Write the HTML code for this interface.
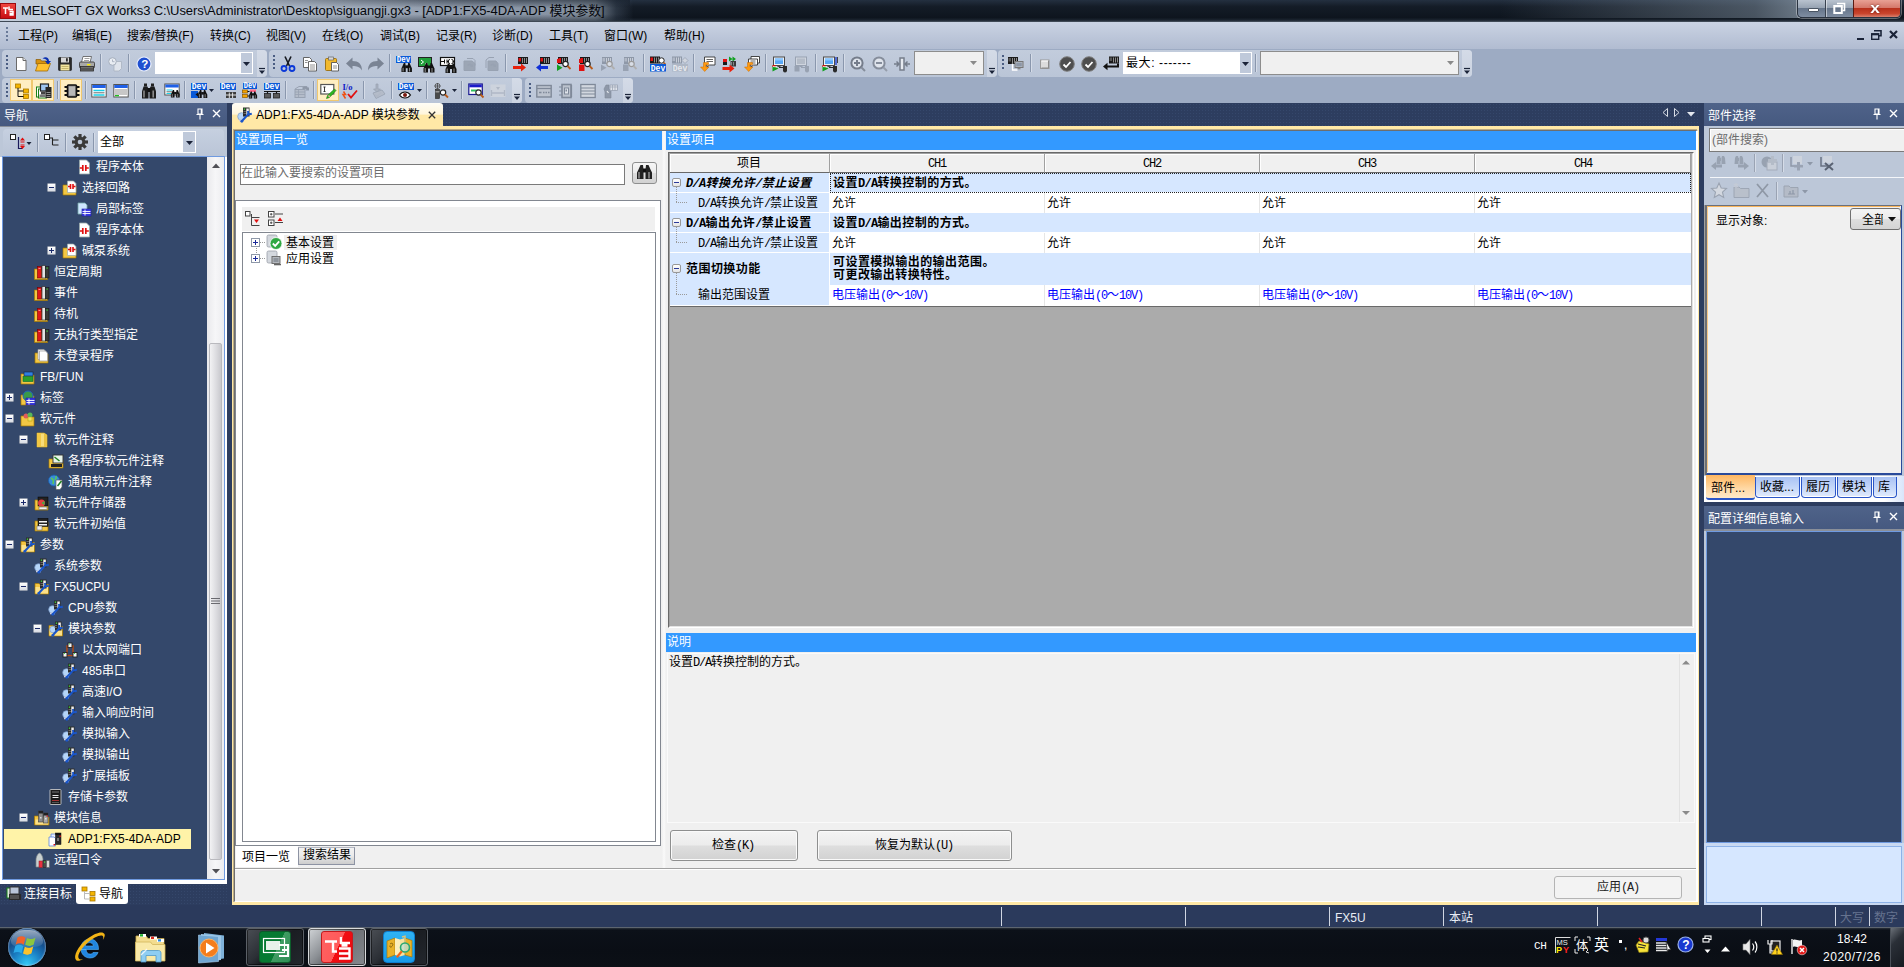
<!DOCTYPE html>
<html lang="zh-CN">
<head>
<meta charset="utf-8">
<title>MELSOFT GX Works3</title>
<style>
*{box-sizing:border-box;margin:0;padding:0}
html,body{width:1904px;height:967px;overflow:hidden;background:#9dabc3}
body{position:relative;font-family:"Liberation Sans","Noto Sans CJK SC",sans-serif;font-size:12px;color:#000;line-height:1}
.a{position:absolute}
.t{position:absolute;white-space:nowrap;line-height:16px;height:16px}
.w{color:#fff}
.sim{font-family:"Liberation Sans","Noto Sans CJK SC",sans-serif}
.mono{font-family:"Liberation Mono","Noto Sans CJK SC",monospace}
svg{position:absolute;overflow:visible}
/* title */
#title{left:0;top:0;width:1904px;height:22px;background:linear-gradient(#243040 0,#141c27 30%,#0e151e 80%,#1c2530 92%,#4d5764 100%)}
#tglow{left:0;top:0;width:700px;height:21px;background:linear-gradient(90deg,#c3cddb 0,#bcc7d6 22%,#a9b4c3 45%,#939eae 62%,#8793a3 80%,#76828f 85%,rgba(60,72,88,.6) 88%,rgba(20,28,39,0) 90.500%)}
#tvig{left:150px;top:0;width:480px;height:21px;background:linear-gradient(rgba(18,26,37,.55),rgba(18,26,37,0) 38%,rgba(18,26,37,0) 68%,rgba(18,26,37,.5));-webkit-mask-image:linear-gradient(90deg,transparent,#000 70%);mask-image:linear-gradient(90deg,transparent,#000 70%)}
#thl{left:1500px;top:0;width:300px;height:18px;background:linear-gradient(90deg,rgba(120,135,150,0),rgba(120,135,150,.55) 85%,rgba(135,150,165,.75))}
#menubar{left:0;top:22px;width:1904px;height:27px;background:linear-gradient(#cad3e3,#bcc6d9 55%,#b1bcd1)}
.tbp{position:absolute;background:linear-gradient(#c2ccdc,#bac5d7);border-radius:4px}
.sep{position:absolute;width:1px;height:18px;background:#8a97ad;box-shadow:1px 0 0 #d5dce8}
.grip{position:absolute;width:2px;height:14px;background:repeating-linear-gradient(#4a5d82 0 2px,transparent 2px 4px)}
.hl{position:absolute;background:#ffeec2;border:1px solid #f0c870}
.dockhdr{position:absolute;height:23px;background:linear-gradient(#4f6389,#465980);color:#fff}
.dots{background-color:#2d3d5f;background-image:radial-gradient(#35476b 0.8px,transparent 1px);background-size:3px 3px}
.tb2{height:21px;background:linear-gradient(#a9c2f4,#c6d8f9 55%,#e1ebfc);border:1px solid #2a56c8;border-top:0;border-radius:0 0 4px 4px;box-shadow:inset 0 -1px 0 #fff}
.ss{top:907px;width:1px;height:19px;background:#d0d6e2}
.tk{top:928px;width:58px;height:38px;border:1px solid #5b6067;border-radius:3px;background:linear-gradient(135deg,#4a4e54 0,#2b2f35 40%,#1a1d22 52%,#23272d 100%);box-shadow:inset 0 0 0 1px rgba(0,0,0,.5)}
.ln{font-family:"Liberation Mono",monospace;font-size:12px;letter-spacing:-1.2px}
.bd .ln{letter-spacing:-.7px}
</style>
</head>
<body>
<!-- title bar -->
<div id="title" class="a"></div>
<div id="tglow" class="a"></div>
<div id="thl" class="a"></div>
<div id="tvig" class="a"></div>
<div class="a" style="left:0;top:3px;width:16px;height:16px;background:linear-gradient(#f0453f,#c80d12);border:1px solid #9c0a0e"></div>
<svg style="left:1px;top:4px" width="14" height="14" viewBox="0 0 14 14"><path d="M2 4h5M4.5 4v6M8 2.5v3h4M8.5 7.5h3.5v3.500h-3.500M8.500 9.500h3.500" fill="none" stroke="#fff" stroke-width="1.500"/></svg>
<div class="t" id="ttext" style="left:21px;top:3px;font-size:13px;letter-spacing:-0.1px;color:#05070c">MELSOFT GX Works3 C:\Users\Administrator\Desktop\siguangji.gx3 - [ADP1:FX5-4DA-ADP 模块参数]</div>
<!-- caption buttons -->
<div class="a" style="left:1797px;top:0;width:104px;height:18px;border:1px solid #2a3340;border-top:0;border-radius:0 0 5px 5px;background:linear-gradient(#b9c3cf 0,#98a4b3 45%,#66758a 50%,#7f8da1 100%);box-shadow:0 0 0 1px rgba(255,255,255,.35)"></div>
<div class="a" style="left:1853px;top:0;width:47px;height:17px;border-radius:0 0 4px 0;background:linear-gradient(#e8a194 0,#d5786a 45%,#b8311c 50%,#c9452d 80%,#d9806e 100%);border-left:1px solid #5a1a12"></div>
<div class="a" style="left:1825px;top:0;width:1px;height:17px;background:#39424f;box-shadow:1px 0 0 rgba(255,255,255,.5)"></div>
<div class="a" style="left:1808px;top:8px;width:11px;height:4px;background:#fff;border:1px solid #4a5563;border-radius:1px"></div>
<svg style="left:1833px;top:2px" width="13" height="12" viewBox="0 0 13 12"><path d="M4 1.500h7.500v7h-2" fill="none" stroke="#fff" stroke-width="1.600"/><rect x="1.300" y="4" width="7.500" height="7" fill="none" stroke="#fff" stroke-width="2"/></svg>
<div class="t" style="left:1871px;top:0px;font-size:15px;font-weight:bold;color:#fff;text-shadow:0 0 2px #5a1a12;transform:scaleX(1.15)">x</div>
<!-- menu -->
<div id="menubar" class="a"></div>
<div class="grip" style="left:6px;top:27px;height:14px;background:repeating-linear-gradient(#6a7a98 0 2px,transparent 2px 4px)"></div>
<div class="t m" style="top:28px;left:18px">工程(P)</div>
<div class="t m" style="top:28px;left:72px">编辑(E)</div>
<div class="t m" style="top:28px;left:127px">搜索/替换(F)</div>
<div class="t m" style="top:28px;left:210px">转换(C)</div>
<div class="t m" style="top:28px;left:266px">视图(V)</div>
<div class="t m" style="top:28px;left:322px">在线(O)</div>
<div class="t m" style="top:28px;left:380px">调试(B)</div>
<div class="t m" style="top:28px;left:436px">记录(R)</div>
<div class="t m" style="top:28px;left:492px">诊断(D)</div>
<div class="t m" style="top:28px;left:549px">工具(T)</div>
<div class="t m" style="top:28px;left:604px">窗口(W)</div>
<div class="t m" style="top:28px;left:664px">帮助(H)</div>
<!-- mdi buttons -->
<div class="a" style="left:1857px;top:38px;width:7px;height:2px;background:#1a2338"></div>
<svg style="left:1871px;top:30px" width="11" height="10" viewBox="0 0 11 10"><path d="M3 .8h7v5h-2" fill="none" stroke="#1a2338" stroke-width="1.600"/><rect x=".7" y="3.800" width="7" height="5.500" fill="none" stroke="#1a2338" stroke-width="1.400"/><path d="M.7 4.500h7" stroke="#1a2338" stroke-width="1.600"/></svg>
<svg style="left:1889px;top:30px" width="9" height="9" viewBox="0 0 9 9"><path d="M1 1l7 7M8 1l-7 7" stroke="#1a2338" stroke-width="2.200"/></svg>
<!-- toolbar row 1 -->
<div class="tbp" style="left:2px;top:50px;width:265px;height:27px"></div>
<div class="grip" style="left:6px;top:55px"></div>
<svg style="left:13px;top:56px" width="16" height="16" viewBox="0 0 16 16"><path d="M3.500 1.500h6.500l3 3v10h-9.500z" fill="#fff" stroke="#6a6a6a" stroke-width="1"/><path d="M10 1.500v3h3" fill="#e8e8e8" stroke="#6a6a6a" stroke-width="1"/></svg>
<svg style="left:35px;top:56px" width="16" height="16" viewBox="0 0 16 16"><path d="M1 3.500h4.500l1 1.500h5v3h-10.500z" fill="#d8920f" stroke="#8a5a05" stroke-width="0.7"/><path d="M0.500 15l2.500-7.500h12.500l-3 7.500z" fill="#ffc02e" stroke="#a06a08" stroke-width="0.8"/><path d="M7.500 2.500c3-2.500 6.500-1 6.500 2.500h2l-3 3.500-3-3.500h2c0-1.500-2-2.500-4.500-2.500z" fill="#0a2fb0"/></svg>
<svg style="left:57px;top:56px" width="16" height="16" viewBox="0 0 16 16"><rect x="1.5" y="1.5" width="13" height="13" fill="#2a2a2a" stroke="#111" stroke-width="0.6" rx="0.8"/><rect x="4" y="1.5" width="8" height="5" fill="#d8d8d8"/><rect x="9" y="2.2" width="1.8" height="3.3" fill="#2a2a2a"/><rect x="3.5" y="8.5" width="9" height="6" fill="#f3e6a0"/><path d="M4.500 10.500h7M4.500 12.500h7" fill="none" stroke="#b8a860" stroke-width="0.8"/></svg>
<svg style="left:79px;top:56px" width="16" height="16" viewBox="0 0 16 16"><path d="M4 0.500h8.500l-1.500 6h-8.500z" fill="#fff" stroke="#555" stroke-width="0.8"/><path d="M5.500 2.500h5M5 4.500h5" fill="none" stroke="#888" stroke-width="0.8"/><rect x="0.5" y="6" width="15" height="6" fill="#a8a8a8" stroke="#3a3a3a" stroke-width="0.9" rx="1.2"/><rect x="1.5" y="10.5" width="13" height="4.5" fill="#6e6e6e" stroke="#2a2a2a" stroke-width="0.8"/><rect x="8" y="8" width="3.5" height="1.4" fill="#f4e800"/><path d="M2 13h12" fill="none" stroke="#3a3a3a" stroke-width="1"/></svg>
<div class="sep" style="left:100px;top:54px"></div>
<svg style="left:107px;top:56px" width="16" height="16" viewBox="0 0 16 16"><path d="M7 5.500h7.500v7l-2.500 2.500h-5z" fill="#dfe4ec" stroke="#aab2c0" stroke-width="0.8"/><circle cx="5.5" cy="5.5" r="3.8" fill="#e9edf3" stroke="#a6afbd" stroke-width="1"/><path d="M5.500 3.500v2.200h2" fill="none" stroke="#a6afbd" stroke-width="0.9"/></svg>
<div class="sep" style="left:128px;top:54px"></div>
<svg style="left:136px;top:56px" width="16" height="16" viewBox="0 0 16 16"><circle cx="8" cy="8" r="7" fill="#1f4fd0" stroke="#e8eefc" stroke-width="1.2"/><text x="5.2" y="12.2" font-size="11.5" font-family="Liberation Sans,monospace" font-weight="bold" fill="#fff">?</text></svg>
<div class="a" style="left:155px;top:52px;width:98px;height:22px;background:#fff"></div>
<div class="a" style="left:241px;top:53px;width:11px;height:20px;background:#bfc9da"></div>
<svg style="left:243px;top:62px" width="7" height="4" viewBox="0 0 7 4"><path d="M0 0h7l-3.500 4z" fill="#1a2338"/></svg>
<div class="a" style="left:257px;top:50px;width:10px;height:27px;background:linear-gradient(#d4dbe7,#cbd3e1);border-radius:0 4px 4px 0"></div>
<svg style="left:258px;top:67px" width="8" height="8" viewBox="0 0 8 8"><path d="M1 1.500h6" stroke="#1a2338" stroke-width="1.200"/><path d="M1 3.500h6l-3 3.500z" fill="#1a2338"/></svg>
<div class="tbp" style="left:269px;top:50px;width:728px;height:27px"></div>
<div class="grip" style="left:273px;top:55px"></div>
<svg style="left:280px;top:56px" width="16" height="16" viewBox="0 0 16 16"><path d="M5 0.500l4.500 9.500M11 0.500l-4.500 9.500" fill="none" stroke="#15181f" stroke-width="1.6"/><circle cx="4" cy="12.5" r="2.5" fill="none" stroke="#0a38d8" stroke-width="1.8"/><circle cx="12" cy="12.5" r="2.5" fill="none" stroke="#0a38d8" stroke-width="1.8"/></svg>
<svg style="left:302px;top:56px" width="16" height="16" viewBox="0 0 16 16"><path d="M1.500 1.500h6l2 2v8h-8z" fill="#fff" stroke="#555" stroke-width="0.9"/><path d="M6.500 5.500h6l2 2v7.500h-8z" fill="#fff" stroke="#555" stroke-width="0.9"/><path d="M8 9h5M8 11h5M8 13h5M3 4.500h3M3 6.500h2.500" fill="none" stroke="#777" stroke-width="0.8"/></svg>
<svg style="left:324px;top:56px" width="16" height="16" viewBox="0 0 16 16"><rect x="1.5" y="2.5" width="11" height="12" fill="#f1b92e" stroke="#9a6d0d" stroke-width="0.9" rx="1"/><rect x="4.5" y="1" width="5" height="3" fill="#d9d9d9" stroke="#666" stroke-width="0.7"/><path d="M7.500 6.500h5l2 2v6.500h-7z" fill="#fff" stroke="#555" stroke-width="0.9"/><path d="M9 10h4M9 12h4" fill="none" stroke="#777" stroke-width="0.8"/></svg>
<svg style="left:346px;top:56px" width="16" height="16" viewBox="0 0 16 16"><path d="M0 7.500l6.500-6v3.500c6 0 9.500 3 9.500 9.500c-2-3.500-5-4.500-9.500-4.500v3.500z" fill="#7a8494"/></svg>
<svg style="left:368px;top:56px" width="16" height="16" viewBox="0 0 16 16"><path d="M16 7.500l-6.500-6v3.500c-6 0-9.500 3-9.500 9.500c2-3.500 5-4.500 9.500-4.500v3.500z" fill="#7a8494"/></svg>
<div class="sep" style="left:389px;top:54px"></div>
<svg style="left:396px;top:56px" width="16" height="16" viewBox="0 0 16 16"><rect x="0" y="0" width="15" height="7" fill="#0a5ad8"/><text x="7.5" y="6.4" text-anchor="middle" font-size="8.6" font-family="Liberation Mono,monospace" font-weight="bold" fill="#fff" textLength="13.5" lengthAdjust="spacingAndGlyphs">Dev</text><g transform="translate(5,6.5) scale(0.95)"><path d="M1.500 4 L3 0.500 H4.500 L5 4 V10 H0.500 V6 Z" fill="#111"/><path d="M10.500 4 L9 0.500 H7.500 L7 4 V10 H11.500 V6 Z" fill="#111"/><rect x="4.5" y="3" width="3" height="3" fill="#111"/><path d="M2.200 5.500v4M9 5.500v4" fill="none" stroke="#8c8c8c" stroke-width="1.1"/></g></svg>
<svg style="left:418px;top:56px" width="16" height="16" viewBox="0 0 16 16"><rect x="0.5" y="1.5" width="13" height="9" fill="#1f9e3a" stroke="#222" stroke-width="1"/><path d="M3 4l2.500 2-2.500 2M7 8h3" fill="none" stroke="#fff" stroke-width="1"/><g transform="translate(5,6.5) scale(1.0)"><path d="M1.500 4 L3 0.500 H4.500 L5 4 V10 H0.500 V6 Z" fill="#111"/><path d="M10.500 4 L9 0.500 H7.500 L7 4 V10 H11.500 V6 Z" fill="#111"/><rect x="4.5" y="3" width="3" height="3" fill="#111"/><path d="M2.200 5.500v4M9 5.500v4" fill="none" stroke="#8c8c8c" stroke-width="1.1"/></g></svg>
<svg style="left:440px;top:56px" width="16" height="16" viewBox="0 0 16 16"><rect x="0.5" y="1.5" width="14" height="8" fill="#fff" stroke="#111" stroke-width="1.2"/><path d="M1 5.500h3.500M4.500 3.500v4M7 3.500v4M7 5.500h2M10 3.500a2 2 0 0 0 0 4M11.500 3.500a2 2 0 0 1 0 4M12.500 5.500h2" fill="none" stroke="#111" stroke-width="1"/><g transform="translate(5,7) scale(1.0)"><path d="M1.500 4 L3 0.500 H4.500 L5 4 V10 H0.500 V6 Z" fill="#111"/><path d="M10.500 4 L9 0.500 H7.500 L7 4 V10 H11.500 V6 Z" fill="#111"/><rect x="4.5" y="3" width="3" height="3" fill="#111"/><path d="M2.200 5.500v4M9 5.500v4" fill="none" stroke="#8c8c8c" stroke-width="1.1"/></g></svg>
<svg style="left:462px;top:56px" width="16" height="16" viewBox="0 0 16 16"><path d="M2 5h8l3 2.500v7h-11z" fill="#9ca6b5" stroke="#98a2b2" stroke-width="1"/><path d="M5 2.500h6l2 2v5" fill="none" stroke="#98a2b2" stroke-width="1"/><path d="M5 9c2-2 4-2 5 0l1-1v3h-3l1-1c-1-1-2-1-3 0z" fill="#98a2b2"/></svg>
<svg style="left:484px;top:56px" width="16" height="16" viewBox="0 0 16 16"><path d="M4 5h8l2 2.500v7h-10z" fill="#9ca6b5" stroke="#98a2b2" stroke-width="1"/><path d="M2 12v-8l3-2.500h5" fill="none" stroke="#98a2b2" stroke-width="1"/><path d="M6 9c2-2 4-2 5 0l1-1v3h-3l1-1c-1-1-2-1-3 0z" fill="#98a2b2"/></svg>
<div class="sep" style="left:505px;top:54px"></div>
<svg style="left:512px;top:56px" width="16" height="16" viewBox="0 0 16 16"><rect x="6" y="1" width="10" height="7" fill="#1a1a1a"/><rect x="6.5" y="2" width="2.5" height="3.5" fill="#e01010"/><rect x="10" y="2" width="1" height="5" fill="#8a8a8a"/><rect x="12" y="2" width="1" height="5" fill="#8a8a8a"/><rect x="14" y="2" width="1" height="5" fill="#8a8a8a"/><path d="M1 10h8v-2.500l5 4-5 4v-2.500h-8z" fill="#e8200c"/></svg>
<svg style="left:534px;top:56px" width="16" height="16" viewBox="0 0 16 16"><rect x="6" y="1" width="10" height="7" fill="#1a1a1a"/><rect x="6.5" y="2" width="2.5" height="3.5" fill="#e01010"/><rect x="10" y="2" width="1" height="5" fill="#8a8a8a"/><rect x="12" y="2" width="1" height="5" fill="#8a8a8a"/><rect x="14" y="2" width="1" height="5" fill="#8a8a8a"/><path d="M14 10h-7v-2.500l-5 4 5 4v-2.500h7z" fill="#1030d8"/></svg>
<svg style="left:556px;top:56px" width="16" height="16" viewBox="0 0 16 16"><rect x="2" y="1" width="10" height="7" fill="#1a1a1a"/><rect x="2.5" y="2" width="2.5" height="3.5" fill="#e01010"/><rect x="6" y="2" width="1" height="5" fill="#8a8a8a"/><rect x="8" y="2" width="1" height="5" fill="#8a8a8a"/><rect x="10" y="2" width="1" height="5" fill="#8a8a8a"/><rect x="1" y="3" width="4" height="4" fill="#e01010"/><path d="M1 8.500l5.500 3.200-5.500 3.300z" fill="#10a020"/><circle cx="9.5" cy="8" r="2.7" fill="#fff" stroke="#222" stroke-width="1.2"/><path d="M11.5 10l3 3" fill="none" stroke="#b85a1a" stroke-width="1.8"/></svg>
<svg style="left:578px;top:56px" width="16" height="16" viewBox="0 0 16 16"><rect x="2" y="1" width="10" height="7" fill="#1a1a1a"/><rect x="2.5" y="2" width="2.5" height="3.5" fill="#e01010"/><rect x="6" y="2" width="1" height="5" fill="#8a8a8a"/><rect x="8" y="2" width="1" height="5" fill="#8a8a8a"/><rect x="10" y="2" width="1" height="5" fill="#8a8a8a"/><rect x="1" y="3" width="4" height="4" fill="#e01010"/><rect x="1" y="8.5" width="5.5" height="6.5" fill="#e01010"/><circle cx="9.5" cy="8" r="2.7" fill="#fff" stroke="#222" stroke-width="1.2"/><path d="M11.5 10l3 3" fill="none" stroke="#b85a1a" stroke-width="1.8"/></svg>
<svg style="left:600px;top:56px" width="16" height="16" viewBox="0 0 16 16"><rect x="2" y="1" width="10" height="7" fill="#8e98a8"/><rect x="2.5" y="2" width="2.5" height="3.5" fill="#b0b8c6"/><rect x="6" y="2" width="1" height="5" fill="#c8ced8"/><rect x="8" y="2" width="1" height="5" fill="#c8ced8"/><rect x="10" y="2" width="1" height="5" fill="#c8ced8"/><path d="M1 8.500l5.500 3.200-5.500 3.300z" fill="#98a2b2"/><circle cx="9.5" cy="8" r="2.7" fill="#d8dde6" stroke="#9a9a9a" stroke-width="1.2"/><path d="M11.5 10l3 3" fill="none" stroke="#b0b0b0" stroke-width="1.8"/></svg>
<svg style="left:622px;top:56px" width="16" height="16" viewBox="0 0 16 16"><rect x="2" y="1" width="10" height="7" fill="#8e98a8"/><rect x="2.5" y="2" width="2.5" height="3.5" fill="#b0b8c6"/><rect x="6" y="2" width="1" height="5" fill="#c8ced8"/><rect x="8" y="2" width="1" height="5" fill="#c8ced8"/><rect x="10" y="2" width="1" height="5" fill="#c8ced8"/><rect x="1" y="8.5" width="5.5" height="6.5" fill="#98a2b2"/><circle cx="9.5" cy="8" r="2.7" fill="#d8dde6" stroke="#9a9a9a" stroke-width="1.2"/><path d="M11.5 10l3 3" fill="none" stroke="#b0b0b0" stroke-width="1.8"/></svg>
<div class="sep" style="left:643px;top:54px"></div>
<svg style="left:650px;top:56px" width="16" height="16" viewBox="0 0 16 16"><rect x="0" y="0.5" width="10" height="7" fill="#1a1a1a"/><rect x="0.5" y="1.5" width="2.5" height="3.5" fill="#e01010"/><rect x="4" y="1.5" width="1" height="5" fill="#8a8a8a"/><rect x="6" y="1.5" width="1" height="5" fill="#8a8a8a"/><rect x="8" y="1.5" width="1" height="5" fill="#8a8a8a"/><circle cx="11.5" cy="4.5" r="2.7" fill="#fff" stroke="#222" stroke-width="1"/><path d="M13.500 6.500l2 2" fill="none" stroke="#b85a1a" stroke-width="1.6"/><rect x="0" y="8" width="16" height="7.5" fill="#0a5ad8"/><text x="8.0" y="14.9" text-anchor="middle" font-size="8.6" font-family="Liberation Mono,monospace" font-weight="bold" fill="#fff" textLength="14.5" lengthAdjust="spacingAndGlyphs">Dev</text></svg>
<svg style="left:672px;top:56px" width="16" height="16" viewBox="0 0 16 16"><rect x="0" y="0.5" width="10" height="7" fill="#8e98a8"/><rect x="0.5" y="1.5" width="2.5" height="3.5" fill="#b0b8c6"/><rect x="4" y="1.5" width="1" height="5" fill="#c8ced8"/><rect x="6" y="1.5" width="1" height="5" fill="#c8ced8"/><rect x="8" y="1.5" width="1" height="5" fill="#c8ced8"/><path d="M10 4.500l3-3 3 3-3 3z" fill="#d0d5de" stroke="#98a2b2" stroke-width="0.8"/><rect x="0" y="8" width="16" height="7.5" fill="#aeb7c5"/><text x="8.0" y="14.9" text-anchor="middle" font-size="8.6" font-family="Liberation Mono,monospace" font-weight="bold" fill="#e6e9ee" textLength="14.5" lengthAdjust="spacingAndGlyphs">Dev</text></svg>
<div class="sep" style="left:693px;top:54px"></div>
<svg style="left:700px;top:56px" width="16" height="16" viewBox="0 0 16 16"><path d="M4.500 1h10.500v8h-5.500l-2.500 2v-2h-2.500z" fill="#fff" stroke="#333" stroke-width="0.9"/><path d="M6.500 3.500h6.500M6.500 5.500h6.500" fill="none" stroke="#555" stroke-width="0.9"/><path d="M8.500 6.500h-5v4.500h-3l4.200 4.500 4.200-4.500h-3v-2.300h2.600z" fill="#ff9a10" stroke="#c86a00" stroke-width="0.5"/></svg>
<svg style="left:722px;top:56px" width="16" height="16" viewBox="0 0 16 16"><rect x="1" y="3" width="4" height="3" fill="#e01010"/><rect x="1" y="6" width="4" height="3" fill="#1a1a1a"/><path d="M7 0.500l3.500 2.500-3.500 2.500zM10.500 0.500l3.500 2.500-3.500 2.500z" fill="#10a020"/><rect x="8.5" y="5" width="5.5" height="5.5" fill="#3a3a3a"/><path d="M9.500 6v3.500M11.500 6v3.500" fill="none" stroke="#999" stroke-width="0.8"/><path d="M0.500 11h7v-2.500l5 4-5 4v-2.500h-7z" fill="#e8200c"/></svg>
<svg style="left:744px;top:56px" width="16" height="16" viewBox="0 0 16 16"><path d="M7 0.500h8.500v6.500h-8.500z" fill="#fff" stroke="#333" stroke-width="0.9"/><path d="M4.500 3h9v6h-4l-2.500 2v-2h-2.500z" fill="#fff" stroke="#333" stroke-width="0.9"/><path d="M6.500 5h5M6.500 7h5" fill="none" stroke="#555" stroke-width="0.9"/><path d="M8.500 6.500h-5v4.500h-3l4.200 4.500 4.200-4.500h-3v-2.300h2.600z" fill="#ff9a10" stroke="#c86a00" stroke-width="0.5"/></svg>
<div class="sep" style="left:765px;top:54px"></div>
<svg style="left:772px;top:56px" width="16" height="16" viewBox="0 0 16 16"><rect x="1.5" y="1" width="11" height="8.5" fill="#eef2f8" stroke="#4a4a4a" stroke-width="1"/><rect x="3" y="2.5" width="8" height="5.5" fill="#58a8f8"/><rect x="3" y="2.5" width="8" height="2" fill="#8cc8ff"/><rect x="5.5" y="9.5" width="3" height="1.5" fill="#4a4a4a"/><path d="M0.500 9.500l6 3-6 3z" fill="#10a020"/><rect x="0.5" y="9" width="3" height="2" fill="#e01010"/><path d="M1 10.500l4 .5" fill="none" stroke="#fff" stroke-width="0.8"/><path d="M7 11.500h4" fill="none" stroke="#2a2a2a" stroke-width="1"/><rect x="11" y="10" width="4" height="2" fill="#2a2a2a"/><path d="M11 12h4v2.500a2 2 0 0 1-4 0z" fill="#2a2a2a"/></svg>
<svg style="left:794px;top:56px" width="16" height="16" viewBox="0 0 16 16"><rect x="1.5" y="1" width="11" height="8.5" fill="#cfd5df" stroke="#98a2b2" stroke-width="1"/><rect x="3" y="2.5" width="8" height="5.5" fill="#b4bcc8"/><rect x="5.5" y="9.5" width="3" height="1.5" fill="#98a2b2"/><rect x="0.5" y="10" width="5" height="5.5" fill="#98a2b2"/><path d="M7 11.500h4" fill="none" stroke="#98a2b2" stroke-width="1"/><rect x="11" y="10" width="4" height="2" fill="#98a2b2"/><path d="M11 12h4v2.500a2 2 0 0 1-4 0z" fill="#98a2b2"/></svg>
<div class="sep" style="left:815px;top:54px"></div>
<svg style="left:822px;top:56px" width="16" height="16" viewBox="0 0 16 16"><rect x="1.5" y="1" width="11" height="8.5" fill="#eef2f8" stroke="#4a4a4a" stroke-width="1"/><rect x="3" y="2.5" width="8" height="5.5" fill="#58a8f8"/><rect x="3" y="2.5" width="8" height="2" fill="#8cc8ff"/><rect x="5.5" y="9.5" width="3" height="1.5" fill="#4a4a4a"/><path d="M0.500 9.500l6 3-6 3z" fill="#10a020"/><rect x="0.5" y="9" width="3" height="2" fill="#e01010"/><path d="M1 10.500l4 .5" fill="none" stroke="#fff" stroke-width="0.8"/><path d="M7 11.500h4" fill="none" stroke="#2a2a2a" stroke-width="1"/><rect x="11" y="10" width="4" height="2" fill="#2a2a2a"/><path d="M11 12h4v2.500a2 2 0 0 1-4 0z" fill="#2a2a2a"/><path d="M14 1v8" fill="none" stroke="#1a3ad0" stroke-width="1.3"/><path d="M15.500 1v6" fill="none" stroke="#222" stroke-width="0.8"/></svg>
<div class="sep" style="left:843px;top:54px"></div>
<svg style="left:850px;top:56px" width="16" height="16" viewBox="0 0 16 16"><circle cx="7" cy="7" r="5.6" fill="#dfe4ec" stroke="#757d8b" stroke-width="2"/><path d="M4 7h6M7 4v6" fill="none" stroke="#757d8b" stroke-width="2"/><path d="M11.500 11.500l3.500 3.500" fill="none" stroke="#858d9b" stroke-width="2"/></svg>
<svg style="left:872px;top:56px" width="16" height="16" viewBox="0 0 16 16"><circle cx="7" cy="7" r="5.6" fill="#dfe4ec" stroke="#858d9b" stroke-width="2"/><path d="M4 7h6" fill="none" stroke="#858d9b" stroke-width="2"/><path d="M11.500 11.500l3.500 3.500" fill="none" stroke="#959dab" stroke-width="2"/></svg>
<svg style="left:894px;top:56px" width="16" height="16" viewBox="0 0 16 16"><rect x="6" y="2" width="4" height="12" fill="#e6eaf0" stroke="#757d8b" stroke-width="1.5"/><path d="M0 8h4.500M2.500 5.500l2.500 2.500-2.500 2.500M16 8h-4.500M13.500 5.500l-2.500 2.500 2.500 2.500" fill="none" stroke="#757d8b" stroke-width="1.5"/></svg>
<div class="a" style="left:914px;top:51px;width:70px;height:24px;background:#f0f0f0;border:1px solid #8d8d8d"></div>
<svg style="left:970px;top:61px" width="7" height="4" viewBox="0 0 7 4"><path d="M0 0h7l-3.500 4z" fill="#8a8a8a"/></svg>
<div class="a" style="left:987px;top:50px;width:10px;height:27px;background:linear-gradient(#d4dbe7,#cbd3e1);border-radius:0 4px 4px 0"></div>
<svg style="left:988px;top:67px" width="8" height="8" viewBox="0 0 8 8"><path d="M1 1.500h6" stroke="#1a2338" stroke-width="1.200"/><path d="M1 3.500h6l-3 3.500z" fill="#1a2338"/></svg>
<div class="tbp" style="left:998px;top:50px;width:474px;height:27px"></div>
<div class="grip" style="left:1002px;top:55px"></div>
<svg style="left:1008px;top:56px" width="16" height="16" viewBox="0 0 16 16"><rect x="0" y="1" width="10" height="7" fill="#1a1a1a"/><rect x="0.5" y="2" width="2.5" height="3.5" fill="#555"/><rect x="4" y="2" width="1" height="5" fill="#8a8a8a"/><rect x="6" y="2" width="1" height="5" fill="#8a8a8a"/><rect x="8" y="2" width="1" height="5" fill="#8a8a8a"/><rect x="7" y="5.5" width="8" height="6" fill="#b4bac4" stroke="#777" stroke-width="1"/><rect x="8.2" y="6.7" width="5.6" height="3.6" fill="#8d97a7"/><path d="M4.500 7.500v6.500h5" fill="none" stroke="#fff" stroke-width="1.3"/><rect x="9.5" y="12" width="3" height="1.3" fill="#888"/></svg>
<div class="sep" style="left:1030px;top:54px"></div>
<svg style="left:1037px;top:56px" width="16" height="16" viewBox="0 0 16 16"><rect x="3.5" y="4" width="8.5" height="8.5" fill="#dcdcdc" stroke="#9a9a9a" stroke-width="1"/><path d="M4.500 5h6.500" fill="none" stroke="#fff" stroke-width="1"/><path d="M11.500 5v7h-7" fill="none" stroke="#8a8a8a" stroke-width="1"/></svg>
<svg style="left:1059px;top:56px" width="16" height="16" viewBox="0 0 16 16"><circle cx="8" cy="8" r="7.3" fill="#4e4e4e" stroke="#808080" stroke-width="1"/><path d="M4.500 8.500l2.500 2.500 4.500-5" fill="none" stroke="#fff" stroke-width="1.8"/></svg>
<svg style="left:1081px;top:56px" width="16" height="16" viewBox="0 0 16 16"><circle cx="8" cy="8" r="7.3" fill="#4e4e4e" stroke="#808080" stroke-width="1"/><path d="M4.500 8.500l2.500 2.500 4.500-5" fill="none" stroke="#fff" stroke-width="1.8"/></svg>
<svg style="left:1103px;top:56px" width="16" height="16" viewBox="0 0 16 16"><rect x="6" y="0.5" width="10" height="7" fill="#1a1a1a"/><rect x="6.5" y="1.5" width="2.5" height="3.5" fill="#555"/><rect x="10" y="1.5" width="1" height="5" fill="#8a8a8a"/><rect x="12" y="1.5" width="1" height="5" fill="#8a8a8a"/><rect x="14" y="1.5" width="1" height="5" fill="#8a8a8a"/><path d="M15 7.500v3h-11" fill="none" stroke="#111" stroke-width="2"/><path d="M0 10.500l4.500-3.800v7.600z" fill="#111"/></svg>
<div class="a" style="left:1123px;top:52px;width:129px;height:22px;background:#fff"></div>
<div class="a" style="left:1240px;top:53px;width:11px;height:20px;background:#bfc9da"></div>
<svg style="left:1242px;top:62px" width="7" height="4" viewBox="0 0 7 4"><path d="M0 0h7l-3.500 4z" fill="#1a2338"/></svg>
<div class="t" style="left:1126px;top:55px;letter-spacing:.6px">最大: -------</div>
<div class="sep" style="left:1255px;top:54px"></div>
<div class="a" style="left:1260px;top:51px;width:199px;height:24px;background:#f0f0f0;border:1px solid #8d8d8d"></div>
<svg style="left:1447px;top:61px" width="7" height="4" viewBox="0 0 7 4"><path d="M0 0h7l-3.500 4z" fill="#8a8a8a"/></svg>
<div class="a" style="left:1462px;top:50px;width:10px;height:27px;background:linear-gradient(#d4dbe7,#cbd3e1);border-radius:0 4px 4px 0"></div>
<svg style="left:1463px;top:67px" width="8" height="8" viewBox="0 0 8 8"><path d="M1 1.500h6" stroke="#1a2338" stroke-width="1.200"/><path d="M1 3.500h6l-3 3.500z" fill="#1a2338"/></svg>
<!-- toolbar row 2 -->
<div class="tbp" style="left:2px;top:78px;width:520px;height:25px"></div>
<div class="grip" style="left:6px;top:83px"></div>
<div class="hl" style="left:10px;top:79px;width:22px;height:22px"></div>
<div class="hl" style="left:32px;top:79px;width:22px;height:22px"></div>
<div class="hl" style="left:60px;top:79px;width:22px;height:22px"></div>
<div class="hl" style="left:317px;top:79px;width:22px;height:22px"></div>
<svg style="left:14px;top:83px" width="16" height="16" viewBox="0 0 16 16"><rect x="1.5" y="1" width="5" height="4" fill="#f4b400" stroke="#a87800" stroke-width="0.8"/><rect x="9.5" y="6" width="5" height="4" fill="#f4b400" stroke="#a87800" stroke-width="0.8"/><rect x="9.5" y="11.5" width="5" height="4" fill="#f4b400" stroke="#a87800" stroke-width="0.8"/><path d="M4 5v8.500h5.500M4 8h5.500" fill="none" stroke="#111" stroke-width="1"/></svg>
<svg style="left:36px;top:83px" width="16" height="16" viewBox="0 0 16 16"><rect x="0.5" y="4" width="8" height="10" fill="#fff" stroke="#188018" stroke-width="1"/><rect x="2.5" y="6" width="8" height="9" fill="#fff" stroke="#188018" stroke-width="1"/><rect x="4.5" y="1" width="8" height="7" fill="#9ec4ee" stroke="#222" stroke-width="1.2"/><rect x="9.5" y="4" width="6" height="11" fill="#262626"/><path d="M10.500 9.500h4M10.500 11.500h4M10.500 13.500h4" fill="none" stroke="#9a9a9a" stroke-width="0.9"/><rect x="5" y="8.5" width="4.5" height="3" fill="#444"/><rect x="3.5" y="11.5" width="6.5" height="2.5" fill="#777"/></svg>
<div class="sep" style="left:57px;top:81px"></div>
<svg style="left:64px;top:83px" width="16" height="16" viewBox="0 0 16 16"><rect x="3.5" y="2" width="9" height="12" fill="#8c8c8c" stroke="#111" stroke-width="1.6" rx="1"/><rect x="5" y="3.5" width="6" height="9" fill="#b8b8b8"/><path d="M0.500 4h3M0.500 8h3M0.500 12h3M12.500 4h3M12.500 8h3M12.500 12h3" fill="none" stroke="#111" stroke-width="1.8"/></svg>
<div class="sep" style="left:85px;top:81px"></div>
<svg style="left:91px;top:83px" width="16" height="16" viewBox="0 0 16 16"><rect x="0.8" y="1.5" width="14.4" height="12.5" fill="#fff" stroke="#555" stroke-width="1"/><rect x="1.3" y="2" width="13.4" height="3" fill="#1f60e8"/><path d="M2.500 7.500h11M2.500 12h11" fill="none" stroke="#18d0e8" stroke-width="1.3"/><path d="M2.500 9.800h11" fill="none" stroke="#444" stroke-width="0.8"/></svg>
<svg style="left:113px;top:83px" width="16" height="16" viewBox="0 0 16 16"><rect x="0.8" y="1.5" width="14.4" height="12.5" fill="#fff" stroke="#555" stroke-width="1"/><rect x="1.3" y="2" width="13.4" height="3" fill="#1f60e8"/><rect x="2.5" y="6.5" width="1" height="1" fill="#222"/><rect x="2.5" y="8.5" width="1" height="1" fill="#222"/><rect x="2.5" y="10.5" width="1" height="1" fill="#222"/><rect x="4.5" y="6.5" width="1" height="1" fill="#222"/><rect x="4.5" y="8.5" width="1" height="1" fill="#222"/><rect x="4.5" y="10.5" width="1" height="1" fill="#222"/><rect x="6.5" y="6.5" width="1" height="1" fill="#222"/><rect x="6.5" y="8.5" width="1" height="1" fill="#222"/><rect x="6.5" y="10.5" width="1" height="1" fill="#222"/><rect x="8.5" y="6.5" width="1" height="1" fill="#222"/><rect x="8.5" y="8.5" width="1" height="1" fill="#222"/><rect x="8.5" y="10.5" width="1" height="1" fill="#222"/><rect x="10.5" y="6.5" width="1" height="1" fill="#222"/><rect x="10.5" y="8.5" width="1" height="1" fill="#222"/><rect x="10.5" y="10.5" width="1" height="1" fill="#222"/><rect x="12.5" y="6.5" width="1" height="1" fill="#222"/><rect x="12.5" y="8.5" width="1" height="1" fill="#222"/><rect x="12.5" y="10.5" width="1" height="1" fill="#222"/><rect x="2" y="12" width="4" height="1.3" fill="#20c020"/></svg>
<div class="sep" style="left:134px;top:81px"></div>
<svg style="left:141px;top:83px" width="16" height="16" viewBox="0 0 16 16"><rect x="3" y="0.5" width="3" height="3" fill="#222"/><rect x="10" y="0.5" width="3" height="3" fill="#222"/><path d="M2.500 3.500h4l1 3v9h-6.500v-7z" fill="#1c1c1c"/><path d="M13.500 3.500h-4l-1 3v9h6.500v-7z" fill="#1c1c1c"/><rect x="6.5" y="5" width="3" height="4" fill="#111"/><path d="M3 7.500v7M12.200 7.500v7" fill="none" stroke="#8a8a8a" stroke-width="1.6"/></svg>
<svg style="left:164px;top:83px" width="16" height="16" viewBox="0 0 16 16"><rect x="0.8" y="1" width="14.4" height="11" fill="#fff" stroke="#555" stroke-width="1"/><rect x="1.3" y="1.5" width="13.4" height="3" fill="#1f60e8"/><path d="M2.500 7h6M2.500 10.500h5" fill="none" stroke="#18d0e8" stroke-width="1.2"/><path d="M2.500 8.800h6" fill="none" stroke="#444" stroke-width="0.8"/><g transform="translate(6.5,6.5) scale(0.8)"><path d="M1.500 4 L3 0.500 H4.500 L5 4 V10 H0.500 V6 Z" fill="#111"/><path d="M10.500 4 L9 0.500 H7.500 L7 4 V10 H11.500 V6 Z" fill="#111"/><rect x="4.5" y="3" width="3" height="3" fill="#111"/><path d="M2.200 5.500v4M9 5.500v4" fill="none" stroke="#8c8c8c" stroke-width="1.1"/></g></svg>
<div class="sep" style="left:184px;top:81px"></div>
<svg style="left:191px;top:83px" width="16" height="16" viewBox="0 0 16 16"><rect x="0" y="0" width="16" height="7" fill="#0a5ad8"/><text x="8.0" y="6.4" text-anchor="middle" font-size="8.6" font-family="Liberation Mono,monospace" font-weight="bold" fill="#fff" textLength="14.5" lengthAdjust="spacingAndGlyphs">Dev</text><rect x="0" y="8" width="7" height="7" fill="#0a5ad8"/><path d="M4.500 11.500l3-2.500v5z" fill="#111"/><g transform="translate(6.5,6.5) scale(0.85)"><path d="M1.500 4 L3 0.500 H4.500 L5 4 V10 H0.500 V6 Z" fill="#111"/><path d="M10.500 4 L9 0.500 H7.500 L7 4 V10 H11.500 V6 Z" fill="#111"/><rect x="4.5" y="3" width="3" height="3" fill="#111"/><path d="M2.200 5.500v4M9 5.500v4" fill="none" stroke="#8c8c8c" stroke-width="1.1"/></g></svg>
<svg style="left:209px;top:89px" width="5" height="3" viewBox="0 0 5 3"><path d="M0 0h5l-2.500 3z" fill="#1a2338"/></svg>
<svg style="left:220px;top:83px" width="16" height="16" viewBox="0 0 16 16"><rect x="0" y="0" width="16" height="7" fill="#0a5ad8"/><text x="8.0" y="6.4" text-anchor="middle" font-size="8.6" font-family="Liberation Mono,monospace" font-weight="bold" fill="#fff" textLength="14.5" lengthAdjust="spacingAndGlyphs">Dev</text><rect x="6" y="9" width="10" height="6" fill="#3c3c3c"/><path d="M6 12h10M9.300 9.500v5.500M12.600 9.500v5.500" fill="none" stroke="#f0f0f0" stroke-width="0.9"/></svg>
<svg style="left:242px;top:83px" width="16" height="16" viewBox="0 0 16 16"><rect x="1" y="0" width="14" height="6" fill="#0a5ad8"/><text x="8.0" y="5.4" text-anchor="middle" font-size="8.6" font-family="Liberation Mono,monospace" font-weight="bold" fill="#fff" textLength="12.5" lengthAdjust="spacingAndGlyphs">Dev</text><rect x="0.5" y="7" width="5" height="3" fill="#f4a400" stroke="#8a5a00" stroke-width="0.7"/><rect x="0.5" y="11.5" width="5" height="3" fill="#f4a400" stroke="#8a5a00" stroke-width="0.7"/><rect x="8" y="6.5" width="6" height="2.5" fill="#ff6a8a"/><g transform="translate(6.5,8) scale(0.75)"><path d="M1.500 4 L3 0.500 H4.500 L5 4 V10 H0.500 V6 Z" fill="#111"/><path d="M10.500 4 L9 0.500 H7.500 L7 4 V10 H11.500 V6 Z" fill="#111"/><rect x="4.5" y="3" width="3" height="3" fill="#111"/><path d="M2.200 5.500v4M9 5.500v4" fill="none" stroke="#8c8c8c" stroke-width="1.1"/></g><path d="M5.500 8.500h2M5.500 13h2" fill="none" stroke="#111" stroke-width="1"/></svg>
<svg style="left:264px;top:83px" width="16" height="16" viewBox="0 0 16 16"><rect x="0" y="0" width="16" height="7" fill="#0a5ad8"/><text x="8.0" y="6.4" text-anchor="middle" font-size="8.6" font-family="Liberation Mono,monospace" font-weight="bold" fill="#fff" textLength="14.5" lengthAdjust="spacingAndGlyphs">Dev</text><rect x="0.5" y="10.5" width="6" height="4.5" fill="#5a5a5a" stroke="#222" stroke-width="0.8"/><rect x="9.5" y="10.5" width="6" height="4.5" fill="#5a5a5a" stroke="#222" stroke-width="0.8"/><path d="M0 8.500h16M3.500 10.500v-2M12.500 10.500v-2" fill="none" stroke="#111" stroke-width="1.2"/></svg>
<div class="sep" style="left:285px;top:81px"></div>
<svg style="left:293px;top:83px" width="16" height="16" viewBox="0 0 16 16"><path d="M2 6l4-2.500h8v3" fill="none" stroke="#98a2b2" stroke-width="1"/><rect x="2" y="6.5" width="10" height="8" fill="#b4bcc9" stroke="#98a2b2" stroke-width="1"/><path d="M2 9h10M2 11.500h10M5.500 6.500v8" fill="none" stroke="#98a2b2" stroke-width="0.8"/><path d="M9 5c2-2 5-2 6 0l1-1v3.500h-3.500l1-1c-1-1-2-1-3 0z" fill="#8e98a8"/></svg>
<div class="sep" style="left:313px;top:81px"></div>
<svg style="left:320px;top:83px" width="16" height="16" viewBox="0 0 16 16"><rect x="0.8" y="1.5" width="13" height="9.5" fill="#fff" stroke="#555" stroke-width="1.2"/><path d="M3.500 4h2M4.500 4v4.500M3.500 8.500h2" fill="none" stroke="#222" stroke-width="0.9"/><path d="M14.500 6l1.500 1.500-6.500 7-3 1 1-3z" fill="#2fb820" stroke="#1a7a10" stroke-width="0.6"/><path d="M8.500 12.500l1.500 1.500" fill="none" stroke="#f0a0a0" stroke-width="1.5"/></svg>
<svg style="left:342px;top:83px" width="16" height="16" viewBox="0 0 16 16"><text x="0.5" y="7" font-size="8.5" font-family="Liberation Serif,monospace" font-weight="bold" fill="#1020c8">I/o</text><path d="M1.500 8.500l2 3-2.500 0 2.500 4" fill="none" stroke="#f05010" stroke-width="1.5"/><path d="M6 11l3 3.500 6-7" fill="none" stroke="#e01010" stroke-width="1.8"/></svg>
<div class="sep" style="left:363px;top:81px"></div>
<svg style="left:370px;top:83px" width="16" height="16" viewBox="0 0 16 16"><path d="M6 1v5h-2.500l3.500 3.500 3.500-3.500h-2.500v-5z" fill="#a9b2c0" stroke="#98a2b2" stroke-width="0.7"/><path d="M3 10l9-3 3 4-9 4.500z" fill="#b4bcc9" stroke="#98a2b2" stroke-width="0.8"/><path d="M5 11.500l2 2 4-4" fill="none" stroke="#b0b8c6" stroke-width="1.3"/></svg>
<div class="sep" style="left:391px;top:81px"></div>
<svg style="left:398px;top:83px" width="16" height="16" viewBox="0 0 16 16"><rect x="0" y="0" width="16" height="7" fill="#0a5ad8"/><text x="8.0" y="6.4" text-anchor="middle" font-size="8.6" font-family="Liberation Mono,monospace" font-weight="bold" fill="#fff" textLength="14.5" lengthAdjust="spacingAndGlyphs">Dev</text><path d="M1.500 12c3-4 8-4 11 0c-3 4-8 4-11 0z" fill="#fff" stroke="#111" stroke-width="1.2"/><circle cx="7" cy="12" r="2" fill="#7a1a10"/></svg>
<svg style="left:417px;top:89px" width="5" height="3" viewBox="0 0 5 3"><path d="M0 0h5l-2.500 3z" fill="#1a2338"/></svg>
<div class="sep" style="left:426px;top:81px"></div>
<svg style="left:433px;top:83px" width="16" height="16" viewBox="0 0 16 16"><circle cx="4.5" cy="3" r="2.5" fill="none" stroke="#444" stroke-width="0.8"/><path d="M4.500 0v6M1.500 3h6" fill="none" stroke="#444" stroke-width="0.8"/><rect x="2.5" y="6.5" width="4" height="9" fill="#4a4a4a" stroke="#222" stroke-width="0.6"/><rect x="2.5" y="8" width="4" height="1.5" fill="#999"/><circle cx="10" cy="9.5" r="2.7" fill="#fff" stroke="#222" stroke-width="1.2"/><path d="M12 11.5l3 3" fill="none" stroke="#b85a1a" stroke-width="1.8"/></svg>
<svg style="left:452px;top:89px" width="5" height="3" viewBox="0 0 5 3"><path d="M0 0h5l-2.500 3z" fill="#1a2338"/></svg>
<div class="sep" style="left:461px;top:81px"></div>
<svg style="left:468px;top:83px" width="16" height="16" viewBox="0 0 16 16"><rect x="0.8" y="1" width="13.5" height="10.5" fill="#fff" stroke="#1a1a90" stroke-width="1.2"/><rect x="1.3" y="1.5" width="12.5" height="2.8" fill="#1a1ac8"/><rect x="3" y="6.5" width="7" height="2" fill="#30c060"/><circle cx="10.5" cy="9.5" r="2.7" fill="#fff" stroke="#222" stroke-width="1.2"/><path d="M12.5 11.5l3 3" fill="none" stroke="#b85a1a" stroke-width="1.8"/></svg>
<svg style="left:490px;top:83px" width="16" height="16" viewBox="0 0 16 16"><rect x="0.5" y="1.5" width="15" height="12.5" fill="#cdd3dd"/><path d="M1.500 7v6M14.500 7v6M1.500 10h13" fill="none" stroke="#b0b8c6" stroke-width="1.3"/><path d="M6 4h4l-2 3z" fill="#b0b8c6"/></svg>
<div class="a" style="left:512px;top:78px;width:10px;height:25px;background:linear-gradient(#d4dbe7,#cbd3e1);border-radius:0 4px 4px 0"></div>
<svg style="left:513px;top:93px" width="8" height="8" viewBox="0 0 8 8"><path d="M1 1.500h6" stroke="#1a2338" stroke-width="1.200"/><path d="M1 3.500h6l-3 3.500z" fill="#1a2338"/></svg>
<div class="tbp" style="left:525px;top:78px;width:108px;height:25px"></div>
<div class="grip" style="left:529px;top:83px"></div>
<svg style="left:536px;top:83px" width="16" height="16" viewBox="0 0 16 16"><rect x="0.8" y="2.5" width="14.4" height="11.5" fill="#bcc3ce" stroke="#7f8999" stroke-width="1.4"/><path d="M1 5.500h14" fill="none" stroke="#7f8999" stroke-width="1.2"/><path d="M3 9.500h2.500M7 9.500h1.500M9.500 9.500h1.500M12 9.500h1.500" fill="none" stroke="#7f8999" stroke-width="1.5"/></svg>
<svg style="left:558px;top:83px" width="16" height="16" viewBox="0 0 16 16"><rect x="4" y="1.5" width="9" height="13" fill="#bcc3ce" stroke="#7f8999" stroke-width="1.6"/><rect x="6.5" y="5" width="4" height="6" fill="#dfe3ea" stroke="#7f8999" stroke-width="1"/><path d="M1 4h2.500M1 8h2.500M1 12h2.500M13.500 2v12" fill="none" stroke="#7f8999" stroke-width="1.2"/><rect x="7.5" y="6.5" width="1.5" height="2" fill="#7f8999"/></svg>
<svg style="left:580px;top:83px" width="16" height="16" viewBox="0 0 16 16"><rect x="0.8" y="1.5" width="14.4" height="13" fill="#d2d7df" stroke="#7f8999" stroke-width="1.3"/><path d="M1 5h14M1 8h14M1 11h14" fill="none" stroke="#7f8999" stroke-width="1.2"/></svg>
<svg style="left:602px;top:83px" width="16" height="16" viewBox="0 0 16 16"><path d="M2 6l2-4h3v4l2 2v7h-6v-6z" fill="#8e98a8" stroke="#7f8999" stroke-width="0.6"/><rect x="8" y="2" width="7.5" height="5.5" fill="#dfe3ea" stroke="#98a2b2" stroke-width="0.8"/><path d="M8 4h7.500M10.500 2v5.500M13 2v5.500" fill="none" stroke="#98a2b2" stroke-width="0.7"/><path d="M5 8l1.500 2" fill="none" stroke="#e8ebf0" stroke-width="1.2"/></svg>
<div class="a" style="left:623px;top:78px;width:10px;height:25px;background:linear-gradient(#d4dbe7,#cbd3e1);border-radius:0 4px 4px 0"></div>
<svg style="left:624px;top:93px" width="8" height="8" viewBox="0 0 8 8"><path d="M1 1.500h6" stroke="#1a2338" stroke-width="1.200"/><path d="M1 3.500h6l-3 3.500z" fill="#1a2338"/></svg>
<!-- navigation panel -->
<div class="a" style="left:227px;top:103px;width:5px;height:803px;background:#2d3d5f"></div>
<div class="dockhdr" style="left:0;top:103px;width:227px"></div>
<div class="t w" style="left:4px;top:108px;font-size:12px">导航</div>
<svg style="left:195px;top:108px" width="10" height="12" viewBox="0 0 10 12"><path d="M3 1h4v5h-4zM1.500 6.500h7M5 6.500v5M6.300 1v5" fill="none" stroke="#fff" stroke-width="1.100"/></svg>
<svg style="left:212px;top:109px" width="9" height="9" viewBox="0 0 9 9"><path d="M1 1l7 7M8 1l-7 7" stroke="#fff" stroke-width="1.400"/></svg>
<div class="a" style="left:0;top:126px;width:227px;height:31px;background:#bcc7d8;border-top:1px solid #8a8f99"></div>
<div class="a" style="left:3px;top:129px;width:221px;height:27px;background:linear-gradient(#c6d0e0,#bac5d7);border-radius:4px"></div>
<svg style="left:10px;top:134px" width="22" height="16" viewBox="0 0 22 16"><rect x=".5" y=".5" width="5" height="5" fill="#fff" stroke="#222"/><path d="M8.500 3v11.500h4" fill="none" stroke="#1a1a5a" stroke-width="1.200"/><path d="M10 6.500h5l-2.500-3zM10 12h5l-2.500 3zM10.500 7.500h4v1h-4zM10.500 10.500h4v1h-4z" fill="#e01010"/><path d="M16.500 8h5l-2.500 3z" fill="#1a2338"/></svg>
<div class="sep" style="left:37px;top:133px;height:19px"></div>
<svg style="left:44px;top:134px" width="16" height="16" viewBox="0 0 16 16"><rect x=".5" y=".5" width="5" height="5" fill="#fff" stroke="#222"/><path d="M6 3h2.500v7M8.500 5h6M8.500 10h6" fill="none" stroke="#222" stroke-width="1.100" transform="translate(0,1)"/></svg>
<div class="sep" style="left:65px;top:133px;height:19px"></div>
<svg style="left:72px;top:134px" width="16" height="16" viewBox="0 0 16 16"><g transform="translate(8,8)"><rect x="-1.600" y="-8" width="3.200" height="4" fill="#3a3a3a" transform="rotate(0)"/><rect x="-1.600" y="-8" width="3.200" height="4" fill="#3a3a3a" transform="rotate(45)"/><rect x="-1.600" y="-8" width="3.200" height="4" fill="#3a3a3a" transform="rotate(90)"/><rect x="-1.600" y="-8" width="3.200" height="4" fill="#3a3a3a" transform="rotate(135)"/><rect x="-1.600" y="-8" width="3.200" height="4" fill="#3a3a3a" transform="rotate(180)"/><rect x="-1.600" y="-8" width="3.200" height="4" fill="#3a3a3a" transform="rotate(225)"/><rect x="-1.600" y="-8" width="3.200" height="4" fill="#3a3a3a" transform="rotate(270)"/><rect x="-1.600" y="-8" width="3.200" height="4" fill="#3a3a3a" transform="rotate(315)"/><circle r="5.300" fill="#3a3a3a"/><circle r="2.300" fill="#bcc7d8"/></g></svg>
<div class="sep" style="left:93px;top:133px;height:19px"></div>
<div class="a" style="left:98px;top:131px;width:98px;height:22px;background:#fff"></div>
<div class="a" style="left:183px;top:132px;width:12px;height:20px;background:#bfc9da"></div>
<svg style="left:186px;top:141px" width="7" height="4" viewBox="0 0 7 4"><path d="M0 0h7l-3.500 4z" fill="#1a2338"/></svg>
<div class="t" style="left:100px;top:134px">全部</div>
<div class="a" style="left:0;top:157px;width:227px;height:727px;background:#fff"></div>
<div class="a" style="left:2px;top:156px;width:223px;height:724px;background:#34486b;border:1px solid #6f9ae0"></div>
<div class="a" style="left:207px;top:157px;width:17px;height:722px;background:linear-gradient(90deg,#e9e9ec,#f6f6f8 50%,#ececef)"></div>
<div class="a" style="left:209px;top:343px;width:13px;height:517px;background:linear-gradient(90deg,#f2f2f4,#dcdce0 55%,#c8c8cd);border:1px solid #b9b9be;border-radius:2px"></div>
<svg style="left:211px;top:597px" width="9" height="8" viewBox="0 0 9 8"><path d="M0 1.500h9M0 4h9M0 6.500h9" stroke="#6a6a70" stroke-width="1"/></svg>
<svg style="left:212px;top:163px" width="8" height="5" viewBox="0 0 8 5"><path d="M0 5h8l-4-4.500z" fill="#505056"/></svg>
<svg style="left:212px;top:869px" width="8" height="5" viewBox="0 0 8 5"><path d="M0 0h8l-4 4.500z" fill="#505056"/></svg>
<div class="a" style="left:4px;top:829px;width:187px;height:20px;background:#fff3a8"></div>
<svg style="left:76px;top:159px" width="16" height="16" viewBox="0 0 16 16"><path d="M3.500 1h7l3 3v11h-10z" fill="#fff" stroke="#9aa" stroke-width="0.8"/><path d="M3.800 9h3M9.800 9h3M6.800 6v6M9.800 6v6" fill="none" stroke="#e01010" stroke-width="1.7"/></svg>
<div class="t" style="left:96px;top:159px;color:#fff">程序本体</div>
<div class="a" style="left:47px;top:183px;width:9px;height:9px;background:linear-gradient(#fff,#d8dce4);border:1px solid #8f98a8;border-radius:1px"></div>
<div class="a" style="left:49px;top:187px;width:5px;height:1px;background:#1a2a6a"></div>
<svg style="left:62px;top:180px" width="16" height="16" viewBox="0 0 16 16"><path d="M1 5h4l1 1h8v9h-13z" fill="#f2c744" stroke="#a87800" stroke-width="0.7"/><path d="M5.500 1h6l2.500 2.500v9h-8.500z" fill="#fff" stroke="#9aa" stroke-width="0.7"/><path d="M6 6.500h2.500M11 6.500h2.500M8.500 4v5M11 4v5" fill="none" stroke="#e01010" stroke-width="1.6"/></svg>
<div class="t" style="left:82px;top:180px;color:#fff">选择回路</div>
<svg style="left:76px;top:201px" width="16" height="16" viewBox="0 0 16 16"><path d="M2 2h7l2 2v9h-9z" fill="#cfe6ff" stroke="#7aa" stroke-width="0.8"/><rect x="6" y="8" width="9" height="7" fill="#3a3ae0" stroke="#2020a0" stroke-width="0.6"/><path d="M6.500 10.500h8M6.500 12.500h8M9 8.500v6" fill="none" stroke="#fff" stroke-width="0.9"/></svg>
<div class="t" style="left:96px;top:201px;color:#fff">局部标签</div>
<svg style="left:76px;top:222px" width="16" height="16" viewBox="0 0 16 16"><path d="M3.500 1h7l3 3v11h-10z" fill="#fff" stroke="#9aa" stroke-width="0.8"/><path d="M3.800 9h3M9.800 9h3M6.800 6v6M9.800 6v6" fill="none" stroke="#e01010" stroke-width="1.7"/></svg>
<div class="t" style="left:96px;top:222px;color:#fff">程序本体</div>
<div class="a" style="left:47px;top:246px;width:9px;height:9px;background:linear-gradient(#fff,#d8dce4);border:1px solid #8f98a8;border-radius:1px"></div>
<div class="a" style="left:49px;top:250px;width:5px;height:1px;background:#1a2a6a"></div>
<div class="a" style="left:51px;top:248px;width:1px;height:5px;background:#1a2a6a"></div>
<svg style="left:62px;top:243px" width="16" height="16" viewBox="0 0 16 16"><path d="M1 5h4l1 1h8v9h-13z" fill="#f2c744" stroke="#a87800" stroke-width="0.7"/><path d="M5.500 1h6l2.500 2.500v9h-8.500z" fill="#fff" stroke="#9aa" stroke-width="0.7"/><path d="M6 6.500h2.500M11 6.500h2.500M8.500 4v5M11 4v5" fill="none" stroke="#e01010" stroke-width="1.6"/></svg>
<div class="t" style="left:82px;top:243px;color:#fff">碱泵系统</div>
<svg style="left:34px;top:264px" width="16" height="16" viewBox="0 0 16 16"><path d="M0.500 5h4l1 1h8v9.500h-13z" fill="#f2c744" stroke="#a87800" stroke-width="0.7"/><rect x="3.5" y="2.5" width="4" height="11.5" fill="#e01818" stroke="#700" stroke-width="0.6"/><rect x="8" y="1.5" width="3.5" height="12.5" fill="#e4e4e4" stroke="#333" stroke-width="0.7"/><rect x="11.5" y="2.5" width="3.5" height="11.5" fill="#3a3a3a" stroke="#111" stroke-width="0.5"/><rect x="12.5" y="3.5" width="1.2" height="1.2" fill="#40e040"/><path d="M4.500 4.500h2" fill="none" stroke="#ffb0b0" stroke-width="0.8"/></svg>
<div class="t" style="left:54px;top:264px;color:#fff">恒定周期</div>
<svg style="left:34px;top:285px" width="16" height="16" viewBox="0 0 16 16"><path d="M0.500 5h4l1 1h8v9.500h-13z" fill="#f2c744" stroke="#a87800" stroke-width="0.7"/><rect x="3.5" y="2.5" width="4" height="11.5" fill="#e01818" stroke="#700" stroke-width="0.6"/><rect x="8" y="1.5" width="3.5" height="12.5" fill="#e4e4e4" stroke="#333" stroke-width="0.7"/><rect x="11.5" y="2.5" width="3.5" height="11.5" fill="#3a3a3a" stroke="#111" stroke-width="0.5"/><rect x="12.5" y="3.5" width="1.2" height="1.2" fill="#40e040"/><path d="M4.500 4.500h2" fill="none" stroke="#ffb0b0" stroke-width="0.8"/></svg>
<div class="t" style="left:54px;top:285px;color:#fff">事件</div>
<svg style="left:34px;top:306px" width="16" height="16" viewBox="0 0 16 16"><path d="M0.500 5h4l1 1h8v9.500h-13z" fill="#f2c744" stroke="#a87800" stroke-width="0.7"/><rect x="3.5" y="2.5" width="4" height="11.5" fill="#e01818" stroke="#700" stroke-width="0.6"/><rect x="8" y="1.5" width="3.5" height="12.5" fill="#e4e4e4" stroke="#333" stroke-width="0.7"/><rect x="11.5" y="2.5" width="3.5" height="11.5" fill="#3a3a3a" stroke="#111" stroke-width="0.5"/><rect x="12.5" y="3.5" width="1.2" height="1.2" fill="#40e040"/><path d="M4.500 4.500h2" fill="none" stroke="#ffb0b0" stroke-width="0.8"/></svg>
<div class="t" style="left:54px;top:306px;color:#fff">待机</div>
<svg style="left:34px;top:327px" width="16" height="16" viewBox="0 0 16 16"><path d="M0.500 5h4l1 1h8v9.500h-13z" fill="#f2c744" stroke="#a87800" stroke-width="0.7"/><rect x="3.5" y="2.5" width="4" height="11.5" fill="#e01818" stroke="#700" stroke-width="0.6"/><rect x="8" y="1.5" width="3.5" height="12.5" fill="#e4e4e4" stroke="#333" stroke-width="0.7"/><rect x="11.5" y="2.5" width="3.5" height="11.5" fill="#3a3a3a" stroke="#111" stroke-width="0.5"/><rect x="12.5" y="3.5" width="1.2" height="1.2" fill="#40e040"/><path d="M4.500 4.500h2" fill="none" stroke="#ffb0b0" stroke-width="0.8"/></svg>
<div class="t" style="left:54px;top:327px;color:#fff">无执行类型指定</div>
<svg style="left:34px;top:348px" width="16" height="16" viewBox="0 0 16 16"><path d="M1 5h4l1 1h8v9h-13z" fill="#f2c744" stroke="#a87800" stroke-width="0.7"/><path d="M4 1.500h6l2 2v8h-8z" fill="#f4f4f4" stroke="#999" stroke-width="0.7"/><path d="M5.500 3h6l2 2v8h-8z" fill="#fff" stroke="#999" stroke-width="0.7"/></svg>
<div class="t" style="left:54px;top:348px;color:#fff">未登录程序</div>
<svg style="left:20px;top:369px" width="16" height="16" viewBox="0 0 16 16"><path d="M1 5h4l1 1h8v9h-13z" fill="#f2c744" stroke="#a87800" stroke-width="0.7"/><rect x="4" y="3" width="9" height="4" fill="#2f7fe0" stroke="#124" stroke-width="0.6"/><rect x="3" y="7.5" width="10" height="5" fill="#2aa02a" stroke="#063" stroke-width="0.6"/></svg>
<div class="t" style="left:40px;top:369px;color:#fff">FB/FUN</div>
<div class="a" style="left:5px;top:393px;width:9px;height:9px;background:linear-gradient(#fff,#d8dce4);border:1px solid #8f98a8;border-radius:1px"></div>
<div class="a" style="left:7px;top:397px;width:5px;height:1px;background:#1a2a6a"></div>
<div class="a" style="left:9px;top:395px;width:1px;height:5px;background:#1a2a6a"></div>
<svg style="left:20px;top:390px" width="16" height="16" viewBox="0 0 16 16"><path d="M1 5h4l1 1h8v9h-13z" fill="#f2c744" stroke="#a87800" stroke-width="0.7"/><circle cx="8" cy="6" r="5" fill="#3a9a4a" stroke="#2060c0" stroke-width="1"/><rect x="6" y="8" width="9" height="7" fill="#3a3ae0" stroke="#2020a0" stroke-width="0.6"/><path d="M6.500 10.500h8M6.500 12.500h8M9 8.500v6" fill="none" stroke="#fff" stroke-width="0.9"/></svg>
<div class="t" style="left:40px;top:390px;color:#fff">标签</div>
<div class="a" style="left:5px;top:414px;width:9px;height:9px;background:linear-gradient(#fff,#d8dce4);border:1px solid #8f98a8;border-radius:1px"></div>
<div class="a" style="left:7px;top:418px;width:5px;height:1px;background:#1a2a6a"></div>
<svg style="left:20px;top:411px" width="16" height="16" viewBox="0 0 16 16"><path d="M1 5h4l1 1h8v9h-13z" fill="#f2c744" stroke="#a87800" stroke-width="0.7"/><circle cx="6" cy="5" r="2.5" fill="#e05a5a"/><circle cx="10" cy="4" r="2.5" fill="#58b858"/><rect x="8" y="6" width="4" height="4" fill="#f0e060" stroke="#a90" stroke-width="0.5"/></svg>
<div class="t" style="left:40px;top:411px;color:#fff">软元件</div>
<div class="a" style="left:19px;top:435px;width:9px;height:9px;background:linear-gradient(#fff,#d8dce4);border:1px solid #8f98a8;border-radius:1px"></div>
<div class="a" style="left:21px;top:439px;width:5px;height:1px;background:#1a2a6a"></div>
<svg style="left:34px;top:432px" width="16" height="16" viewBox="0 0 16 16"><path d="M3 1h7l3 2v12h-10z" fill="#f7dc7a" stroke="#c8a020" stroke-width="0.7"/><path d="M3 1h4v14h-4z" fill="#f2c744"/><path d="M10 1l3 2v12h-3z" fill="#e8c040"/></svg>
<div class="t" style="left:54px;top:432px;color:#fff">软元件注释</div>
<svg style="left:48px;top:453px" width="16" height="16" viewBox="0 0 16 16"><path d="M1 6h4l1 1h9v8h-14z" fill="#f2c744" stroke="#a87800" stroke-width="0.7"/><rect x="5" y="2" width="10" height="8" fill="#e8f4e8" stroke="#333" stroke-width="0.9"/><path d="M6.500 4l5 4" fill="none" stroke="#208020" stroke-width="1.5"/><rect x="3" y="11" width="11" height="3" fill="#222"/></svg>
<div class="t" style="left:68px;top:453px;color:#fff">各程序软元件注释</div>
<svg style="left:48px;top:474px" width="16" height="16" viewBox="0 0 16 16"><circle cx="6" cy="6.5" r="5.5" fill="#3a8ad8" stroke="#1a5aa8" stroke-width="0.8"/><path d="M3 4c2 1 3 3 2 6M8 2c1 2 0 3-1 4" fill="none" stroke="#5ac85a" stroke-width="1.6"/><path d="M8 6h6v7l-2 2.500h-4z" fill="#fff" stroke="#666" stroke-width="0.7"/><path d="M9.500 12l4-5" fill="none" stroke="#208020" stroke-width="1.5"/></svg>
<div class="t" style="left:68px;top:474px;color:#fff">通用软元件注释</div>
<div class="a" style="left:19px;top:498px;width:9px;height:9px;background:linear-gradient(#fff,#d8dce4);border:1px solid #8f98a8;border-radius:1px"></div>
<div class="a" style="left:21px;top:502px;width:5px;height:1px;background:#1a2a6a"></div>
<div class="a" style="left:23px;top:500px;width:1px;height:5px;background:#1a2a6a"></div>
<svg style="left:34px;top:495px" width="16" height="16" viewBox="0 0 16 16"><path d="M1 5h4l1 1h8v9h-13z" fill="#f2c744" stroke="#a87800" stroke-width="0.7"/><rect x="4" y="2" width="10" height="9" fill="#222" stroke="#000" stroke-width="0.5"/><circle cx="7.5" cy="8" r="3.5" fill="#e04040"/><path d="M7.500 8l3-2v4z" fill="#40b040"/><rect x="5" y="12" width="8" height="2.5" fill="#f0f0f0" stroke="#555" stroke-width="0.5"/></svg>
<div class="t" style="left:54px;top:495px;color:#fff">软元件存储器</div>
<svg style="left:34px;top:516px" width="16" height="16" viewBox="0 0 16 16"><path d="M1 5h4l1 1h8v9h-13z" fill="#f2c744" stroke="#a87800" stroke-width="0.7"/><rect x="4" y="2.5" width="10" height="8" fill="#222" stroke="#000" stroke-width="0.5"/><rect x="5" y="5" width="8" height="1.5" fill="#f4f4f4"/><rect x="5" y="8" width="8" height="1.5" fill="#f4f4f4"/><rect x="3" y="10" width="5" height="4" fill="#f0f0f0" stroke="#555" stroke-width="0.5"/></svg>
<div class="t" style="left:54px;top:516px;color:#fff">软元件初始值</div>
<div class="a" style="left:5px;top:540px;width:9px;height:9px;background:linear-gradient(#fff,#d8dce4);border:1px solid #8f98a8;border-radius:1px"></div>
<div class="a" style="left:7px;top:544px;width:5px;height:1px;background:#1a2a6a"></div>
<svg style="left:20px;top:537px" width="16" height="16" viewBox="0 0 16 16"><path d="M1 4.500h4l1 1h8.500v9.500h-13.500z" fill="#f5c542" stroke="#a87800" stroke-width="0.7"/><path d="M1.500 8h12.500v6.500h-12.500z" fill="#fbe08a"/><rect x="6" y="0.5" width="6.5" height="9" fill="#2c2c2c"/><rect x="9.3" y="1.5" width="2.5" height="6.5" fill="#f0f0f0"/><rect x="6.8" y="1.5" width="1.3" height="1.3" fill="#40e040"/><path d="M6.500 4.500h2.500M6.500 6.500h2.500" fill="none" stroke="#777" stroke-width="0.8"/><path d="M4.500 14.500l7-7.500" fill="none" stroke="#1a55c8" stroke-width="2"/><path d="M11.300 7.500l-.300-3.500M11.300 7.500l3.500-.700" fill="none" stroke="#1a55c8" stroke-width="1.9"/><circle cx="4.8" cy="14.3" r="1.4" fill="#1a55c8"/></svg>
<div class="t" style="left:40px;top:537px;color:#fff">参数</div>
<svg style="left:34px;top:558px" width="16" height="16" viewBox="0 0 16 16"><circle cx="4.5" cy="9.5" r="3.8" fill="#b5d5f8" stroke="#7a9ac8" stroke-width="0.7"/><rect x="2" y="12.5" width="5" height="1.8" fill="#d0d0e0"/><rect x="6" y="0.5" width="6.5" height="9" fill="#2c2c2c"/><rect x="9.3" y="1.5" width="2.5" height="6.5" fill="#f0f0f0"/><rect x="6.8" y="1.5" width="1.3" height="1.3" fill="#40e040"/><path d="M6.500 4.500h2.500M6.500 6.500h2.500" fill="none" stroke="#777" stroke-width="0.8"/><path d="M4.500 14.500l7-7.500" fill="none" stroke="#1a55c8" stroke-width="2"/><path d="M11.300 7.500l-.300-3.500M11.300 7.500l3.500-.700" fill="none" stroke="#1a55c8" stroke-width="1.9"/><circle cx="4.8" cy="14.3" r="1.4" fill="#1a55c8"/></svg>
<div class="t" style="left:54px;top:558px;color:#fff">系统参数</div>
<div class="a" style="left:19px;top:582px;width:9px;height:9px;background:linear-gradient(#fff,#d8dce4);border:1px solid #8f98a8;border-radius:1px"></div>
<div class="a" style="left:21px;top:586px;width:5px;height:1px;background:#1a2a6a"></div>
<svg style="left:34px;top:579px" width="16" height="16" viewBox="0 0 16 16"><path d="M1 4.500h4l1 1h8.500v9.500h-13.500z" fill="#f5c542" stroke="#a87800" stroke-width="0.7"/><path d="M1.500 8h12.500v6.500h-12.500z" fill="#fbe08a"/><rect x="6" y="0.5" width="6.5" height="9" fill="#2c2c2c"/><rect x="9.3" y="1.5" width="2.5" height="6.5" fill="#f0f0f0"/><rect x="6.8" y="1.5" width="1.3" height="1.3" fill="#40e040"/><path d="M6.500 4.500h2.500M6.500 6.500h2.500" fill="none" stroke="#777" stroke-width="0.8"/><path d="M4.500 14.500l7-7.500" fill="none" stroke="#1a55c8" stroke-width="2"/><path d="M11.300 7.500l-.300-3.500M11.300 7.500l3.500-.700" fill="none" stroke="#1a55c8" stroke-width="1.9"/><circle cx="4.8" cy="14.3" r="1.4" fill="#1a55c8"/></svg>
<div class="t" style="left:54px;top:579px;color:#fff">FX5UCPU</div>
<svg style="left:48px;top:600px" width="16" height="16" viewBox="0 0 16 16"><circle cx="4.5" cy="9.5" r="3.8" fill="#b5d5f8" stroke="#7a9ac8" stroke-width="0.7"/><rect x="2" y="12.5" width="5" height="1.8" fill="#d0d0e0"/><rect x="6" y="0.5" width="6.5" height="9" fill="#2c2c2c"/><rect x="9.3" y="1.5" width="2.5" height="6.5" fill="#f0f0f0"/><rect x="6.8" y="1.5" width="1.3" height="1.3" fill="#40e040"/><path d="M6.500 4.500h2.500M6.500 6.500h2.500" fill="none" stroke="#777" stroke-width="0.8"/><path d="M4.500 14.500l7-7.500" fill="none" stroke="#1a55c8" stroke-width="2"/><path d="M11.300 7.500l-.300-3.500M11.300 7.500l3.500-.700" fill="none" stroke="#1a55c8" stroke-width="1.9"/><circle cx="4.8" cy="14.3" r="1.4" fill="#1a55c8"/></svg>
<div class="t" style="left:68px;top:600px;color:#fff">CPU参数</div>
<div class="a" style="left:33px;top:624px;width:9px;height:9px;background:linear-gradient(#fff,#d8dce4);border:1px solid #8f98a8;border-radius:1px"></div>
<div class="a" style="left:35px;top:628px;width:5px;height:1px;background:#1a2a6a"></div>
<svg style="left:48px;top:621px" width="16" height="16" viewBox="0 0 16 16"><path d="M1 4.500h4l1 1h8.500v9.500h-13.500z" fill="#f5c542" stroke="#a87800" stroke-width="0.7"/><path d="M1.500 8h12.500v6.500h-12.500z" fill="#fbe08a"/><circle cx="5" cy="8.5" r="3.3" fill="#b5d5f8" stroke="#7a9ac8" stroke-width="0.7"/><rect x="7" y="0.5" width="6.5" height="9" fill="#2c2c2c"/><rect x="10.3" y="1.5" width="2.5" height="6.5" fill="#f0f0f0"/><rect x="7.8" y="1.5" width="1.3" height="1.3" fill="#40e040"/><path d="M6.500 4.500h2.500M6.500 6.500h2.500" fill="none" stroke="#777" stroke-width="0.8"/><path d="M4.500 14.500l7-7.500" fill="none" stroke="#1a55c8" stroke-width="2"/><path d="M11.300 7.500l-.300-3.500M11.300 7.500l3.500-.700" fill="none" stroke="#1a55c8" stroke-width="1.9"/><circle cx="4.8" cy="14.3" r="1.4" fill="#1a55c8"/></svg>
<div class="t" style="left:68px;top:621px;color:#fff">模块参数</div>
<svg style="left:62px;top:642px" width="16" height="16" viewBox="0 0 16 16"><path d="M5 12v-8h6v8" fill="none" stroke="#b84a10" stroke-width="1.4"/><path d="M3 13.500h10" fill="none" stroke="#b84a10" stroke-width="1.4"/><rect x="6" y="1" width="4" height="4.5" fill="#f0f0f0" stroke="#222" stroke-width="0.9"/><rect x="1" y="10.5" width="4" height="4.5" fill="#f0f0f0" stroke="#222" stroke-width="0.9"/><rect x="11" y="10.5" width="4" height="4.5" fill="#f0f0f0" stroke="#222" stroke-width="0.9"/><rect x="7" y="1.5" width="1" height="1" fill="#40e040"/><rect x="2" y="11" width="1" height="1" fill="#40e040"/><rect x="12" y="11" width="1" height="1" fill="#40e040"/></svg>
<div class="t" style="left:82px;top:642px;color:#fff">以太网端口</div>
<svg style="left:62px;top:663px" width="16" height="16" viewBox="0 0 16 16"><circle cx="4.5" cy="9.5" r="3.8" fill="#b5d5f8" stroke="#7a9ac8" stroke-width="0.7"/><rect x="2" y="12.5" width="5" height="1.8" fill="#d0d0e0"/><rect x="6" y="0.5" width="6.5" height="9" fill="#2c2c2c"/><rect x="9.3" y="1.5" width="2.5" height="6.5" fill="#f0f0f0"/><rect x="6.8" y="1.5" width="1.3" height="1.3" fill="#40e040"/><path d="M6.500 4.500h2.500M6.500 6.500h2.500" fill="none" stroke="#777" stroke-width="0.8"/><path d="M4.500 14.500l7-7.500" fill="none" stroke="#1a55c8" stroke-width="2"/><path d="M11.300 7.500l-.300-3.500M11.300 7.500l3.500-.700" fill="none" stroke="#1a55c8" stroke-width="1.9"/><circle cx="4.8" cy="14.3" r="1.4" fill="#1a55c8"/></svg>
<div class="t" style="left:82px;top:663px;color:#fff">485串口</div>
<svg style="left:62px;top:684px" width="16" height="16" viewBox="0 0 16 16"><circle cx="4.5" cy="9.5" r="3.8" fill="#b5d5f8" stroke="#7a9ac8" stroke-width="0.7"/><rect x="2" y="12.5" width="5" height="1.8" fill="#d0d0e0"/><rect x="6" y="0.5" width="6.5" height="9" fill="#2c2c2c"/><rect x="9.3" y="1.5" width="2.5" height="6.5" fill="#f0f0f0"/><rect x="6.8" y="1.5" width="1.3" height="1.3" fill="#40e040"/><path d="M6.500 4.500h2.500M6.500 6.500h2.500" fill="none" stroke="#777" stroke-width="0.8"/><path d="M4.500 14.500l7-7.500" fill="none" stroke="#1a55c8" stroke-width="2"/><path d="M11.300 7.500l-.300-3.500M11.300 7.500l3.500-.700" fill="none" stroke="#1a55c8" stroke-width="1.9"/><circle cx="4.8" cy="14.3" r="1.4" fill="#1a55c8"/></svg>
<div class="t" style="left:82px;top:684px;color:#fff">高速I/O</div>
<svg style="left:62px;top:705px" width="16" height="16" viewBox="0 0 16 16"><circle cx="4.5" cy="9.5" r="3.8" fill="#b5d5f8" stroke="#7a9ac8" stroke-width="0.7"/><rect x="2" y="12.5" width="5" height="1.8" fill="#d0d0e0"/><rect x="6" y="0.5" width="6.5" height="9" fill="#2c2c2c"/><rect x="9.3" y="1.5" width="2.5" height="6.5" fill="#f0f0f0"/><rect x="6.8" y="1.5" width="1.3" height="1.3" fill="#40e040"/><path d="M6.500 4.500h2.500M6.500 6.500h2.500" fill="none" stroke="#777" stroke-width="0.8"/><path d="M4.500 14.500l7-7.500" fill="none" stroke="#1a55c8" stroke-width="2"/><path d="M11.300 7.500l-.300-3.500M11.300 7.500l3.500-.700" fill="none" stroke="#1a55c8" stroke-width="1.9"/><circle cx="4.8" cy="14.3" r="1.4" fill="#1a55c8"/></svg>
<div class="t" style="left:82px;top:705px;color:#fff">输入响应时间</div>
<svg style="left:62px;top:726px" width="16" height="16" viewBox="0 0 16 16"><circle cx="4.5" cy="9.5" r="3.8" fill="#b5d5f8" stroke="#7a9ac8" stroke-width="0.7"/><rect x="2" y="12.5" width="5" height="1.8" fill="#d0d0e0"/><rect x="6" y="0.5" width="6.5" height="9" fill="#2c2c2c"/><rect x="9.3" y="1.5" width="2.5" height="6.5" fill="#f0f0f0"/><rect x="6.8" y="1.5" width="1.3" height="1.3" fill="#40e040"/><path d="M6.500 4.500h2.500M6.500 6.500h2.500" fill="none" stroke="#777" stroke-width="0.8"/><path d="M4.500 14.500l7-7.500" fill="none" stroke="#1a55c8" stroke-width="2"/><path d="M11.300 7.500l-.300-3.500M11.300 7.500l3.500-.700" fill="none" stroke="#1a55c8" stroke-width="1.9"/><circle cx="4.8" cy="14.3" r="1.4" fill="#1a55c8"/></svg>
<div class="t" style="left:82px;top:726px;color:#fff">模拟输入</div>
<svg style="left:62px;top:747px" width="16" height="16" viewBox="0 0 16 16"><circle cx="4.5" cy="9.5" r="3.8" fill="#b5d5f8" stroke="#7a9ac8" stroke-width="0.7"/><rect x="2" y="12.5" width="5" height="1.8" fill="#d0d0e0"/><rect x="6" y="0.5" width="6.5" height="9" fill="#2c2c2c"/><rect x="9.3" y="1.5" width="2.5" height="6.5" fill="#f0f0f0"/><rect x="6.8" y="1.5" width="1.3" height="1.3" fill="#40e040"/><path d="M6.500 4.500h2.500M6.500 6.500h2.500" fill="none" stroke="#777" stroke-width="0.8"/><path d="M4.500 14.500l7-7.500" fill="none" stroke="#1a55c8" stroke-width="2"/><path d="M11.300 7.500l-.300-3.500M11.300 7.500l3.500-.700" fill="none" stroke="#1a55c8" stroke-width="1.9"/><circle cx="4.8" cy="14.3" r="1.4" fill="#1a55c8"/></svg>
<div class="t" style="left:82px;top:747px;color:#fff">模拟输出</div>
<svg style="left:62px;top:768px" width="16" height="16" viewBox="0 0 16 16"><circle cx="4.5" cy="9.5" r="3.8" fill="#b5d5f8" stroke="#7a9ac8" stroke-width="0.7"/><rect x="2" y="12.5" width="5" height="1.8" fill="#d0d0e0"/><rect x="6" y="0.5" width="6.5" height="9" fill="#2c2c2c"/><rect x="9.3" y="1.5" width="2.5" height="6.5" fill="#f0f0f0"/><rect x="6.8" y="1.5" width="1.3" height="1.3" fill="#40e040"/><path d="M6.500 4.500h2.500M6.500 6.500h2.500" fill="none" stroke="#777" stroke-width="0.8"/><path d="M4.500 14.500l7-7.500" fill="none" stroke="#1a55c8" stroke-width="2"/><path d="M11.300 7.500l-.300-3.500M11.300 7.500l3.500-.700" fill="none" stroke="#1a55c8" stroke-width="1.9"/><circle cx="4.8" cy="14.3" r="1.4" fill="#1a55c8"/></svg>
<div class="t" style="left:82px;top:768px;color:#fff">扩展插板</div>
<svg style="left:48px;top:789px" width="16" height="16" viewBox="0 0 16 16"><rect x="2" y="0.5" width="11" height="15" fill="#1c1c1c" stroke="#d8d8d8" stroke-width="0.8" rx="0.8"/><rect x="4" y="2.5" width="7" height="1" fill="#777"/><path d="M4.500 6.500h6M4.500 8.500h6" fill="none" stroke="#e8e8e8" stroke-width="1"/><rect x="4" y="11" width="7" height="1" fill="#a03030"/><rect x="4" y="13" width="7" height="1" fill="#555"/></svg>
<div class="t" style="left:68px;top:789px;color:#fff">存储卡参数</div>
<div class="a" style="left:19px;top:813px;width:9px;height:9px;background:linear-gradient(#fff,#d8dce4);border:1px solid #8f98a8;border-radius:1px"></div>
<div class="a" style="left:21px;top:817px;width:5px;height:1px;background:#1a2a6a"></div>
<svg style="left:34px;top:810px" width="16" height="16" viewBox="0 0 16 16"><path d="M0.500 6h4l1 1h9.500v8h-14.500z" fill="#f5c542" stroke="#a87800" stroke-width="0.7"/><path d="M1.500 9.500h12.500v5h-12.500z" fill="#fbe08a"/><rect x="4.5" y="1" width="4.5" height="11" fill="#8e8e8e" stroke="#3a3a3a" stroke-width="0.6"/><rect x="4.5" y="1" width="4.5" height="2.5" fill="#222"/><rect x="9.5" y="3" width="4.5" height="10" fill="#a8a8a8" stroke="#3a3a3a" stroke-width="0.6"/><rect x="9.5" y="3" width="4.5" height="2.5" fill="#222"/><rect x="12.5" y="5.5" width="1.3" height="1.3" fill="#e01010"/><rect x="6" y="7" width="1.5" height="1.5" fill="#ddd"/><rect x="11" y="8" width="1.5" height="1.5" fill="#ddd"/></svg>
<div class="t" style="left:54px;top:810px;color:#fff">模块信息</div>
<svg style="left:48px;top:831px" width="16" height="16" viewBox="0 0 16 16"><path d="M3 3h5l1.500 1.500v7h-6.500z" fill="#e8f0ff" stroke="#5a86e0" stroke-width="0.8"/><path d="M1 6h5l1.500 1.500v7.500h-6.500z" fill="#fff" stroke="#5a86e0" stroke-width="0.8"/><rect x="7.5" y="2" width="5.5" height="11.5" fill="#2a2a2a" stroke="#111" stroke-width="0.5"/><rect x="7.5" y="2" width="5.5" height="2" fill="#111"/><rect x="11.5" y="4.5" width="1.3" height="1.5" fill="#e01010"/><rect x="9" y="7" width="2" height="3" fill="#777"/><rect x="5.5" y="13" width="1.5" height="1.5" fill="#e01010"/></svg>
<div class="t" style="left:68px;top:831px;color:#000">ADP1:FX5-4DA-ADP</div>
<svg style="left:34px;top:852px" width="16" height="16" viewBox="0 0 16 16"><path d="M2 15v-7c0-4 2.500-7 3.500-7s3.500 3 3.500 7v7z" fill="#c9d0d0" stroke="#808888" stroke-width="0.7"/><rect x="5" y="9" width="3.5" height="6.5" fill="#e83040" stroke="#901018" stroke-width="0.5"/><rect x="9" y="8.5" width="3.5" height="7" fill="#4a4a4a" stroke="#222" stroke-width="0.5"/><rect x="12.5" y="8.5" width="3" height="7" fill="#d8d8d8" stroke="#555" stroke-width="0.5"/><rect x="10" y="9.5" width="1.2" height="1.2" fill="#40e040"/></svg>
<div class="t" style="left:54px;top:852px;color:#fff">远程口令</div>
<div class="a dots" style="left:0;top:884px;width:227px;height:22px"></div>
<div class="a" style="left:76px;top:884px;width:52px;height:20px;background:#fff;border-radius:0 0 3px 3px"></div>
<svg style="left:6px;top:886px" width="16" height="16" viewBox="0 0 16 16"><rect x="1" y="2" width="9" height="10" fill="#dfe9df" stroke="#188018"/><rect x="4" y="1" width="9" height="7" fill="#b8c4d8" stroke="#333"/><rect x="3" y="8" width="12" height="6" fill="#2a2a2a"/><path d="M4 10h9M4 12h9" stroke="#8a8a8a" stroke-width=".8"/></svg>
<div class="t w" style="left:24px;top:886px">连接目标</div>
<svg style="left:81px;top:886px" width="16" height="16" viewBox="0 0 16 16"><rect x="1" y="1" width="5" height="4" fill="#f4b400" stroke="#a87800" stroke-width=".8"/><rect x="9" y="5.500" width="5" height="4" fill="#f4b400" stroke="#a87800" stroke-width=".8"/><rect x="9" y="11" width="5" height="4" fill="#f4b400" stroke="#a87800" stroke-width=".8"/><path d="M3.500 5v8h5.500M3.500 7.500h5.500" fill="none" stroke="#bbb" stroke-width="1"/></svg>
<div class="t" style="left:99px;top:886px">导航</div>
<!-- document tab strip -->
<div class="a dots" style="left:232px;top:103px;width:1472px;height:24px"></div>
<div class="a" style="left:1699px;top:103px;width:5px;height:803px;background:#2d3d5f"></div>
<div class="a" style="left:232px;top:103px;width:211px;height:26px;border-radius:3px 3px 0 0;background:linear-gradient(#fffdf6 0,#fff6dc 42%,#ffe8a6 48%,#ffe8a6 100%)"></div>
<svg style="left:237px;top:107px" width="16" height="16" viewBox="0 0 16 16"><circle cx="4.5" cy="9.5" r="3.8" fill="#b5d5f8" stroke="#7a9ac8" stroke-width="0.7"/><rect x="2" y="12.5" width="5" height="1.8" fill="#d0d0e0"/><rect x="6" y="0.5" width="6.5" height="9" fill="#2c2c2c"/><rect x="9.3" y="1.5" width="2.5" height="6.5" fill="#f0f0f0"/><rect x="6.8" y="1.5" width="1.3" height="1.3" fill="#40e040"/><path d="M6.500 4.500h2.500M6.500 6.500h2.500" fill="none" stroke="#777" stroke-width="0.8"/><path d="M4.500 14.500l7-7.500" fill="none" stroke="#1a55c8" stroke-width="2"/><path d="M11.300 7.500l-.300-3.500M11.300 7.500l3.500-.700" fill="none" stroke="#1a55c8" stroke-width="1.9"/><circle cx="4.8" cy="14.3" r="1.4" fill="#1a55c8"/></svg>
<div class="t" style="left:256px;top:107px">ADP1:FX5-4DA-ADP 模块参数</div>
<svg style="left:428px;top:111px" width="8" height="8" viewBox="0 0 8 8"><path d="M.8.8l6.400 6.400M7.200.8l-6.400 6.400" stroke="#333" stroke-width="1.300"/></svg>
<svg style="left:1661px;top:107px" width="34" height="12" viewBox="0 0 34 12"><path d="M6.500 1.500v8l-4.500-4zM13.500 1.500v8l4.500-4z" fill="none" stroke="#d7dce6" stroke-width="1"/><path d="M26 5h8l-4 4.500z" fill="#e4e8ef"/></svg>
<!-- document frame -->
<div class="a" style="left:232px;top:126px;width:1467px;height:779px;background:#ffe8a6"></div>
<div class="a" style="left:233px;top:129px;width:1464px;height:773px;background:#b9ab88"></div>
<div class="a" style="left:234px;top:130px;width:1464px;height:772px;background:#f0f0f0;border-left:1px solid #6e6e6e;border-top:1px solid #6e6e6e;border-right:2px solid #fff;border-bottom:1px solid #fff"></div>
<!-- left: item list -->
<div class="a" style="left:235px;top:131px;width:427px;height:19px;background:#3399ff"></div>
<div class="t w sim" style="left:236px;top:132px">设置项目一览</div>
<div class="a" style="left:240px;top:164px;width:385px;height:21px;background:#fff;border:1px solid #7a7a7a"></div>
<div class="t sim" style="left:241px;top:165px;color:#6d6d6d">在此输入要搜索的设置项目</div>
<div class="a" style="left:632px;top:162px;width:25px;height:22px;border:1px solid #8e8f8f;border-radius:3px;background:linear-gradient(#f6f6f6,#ebebeb 50%,#dddddd 51%,#d2d2d2)"></div>
<svg style="left:636px;top:164px" width="17" height="16" viewBox="0 0 17 16"><path d="M2.500 5.500L4.500 1H7L7.500 5.500V15H1V8.500Z" fill="#222"/><path d="M14.500 5.500L12.500 1H10L9.500 5.500V15H16V8.500Z" fill="#222"/><rect x="7" y="4.500" width="3" height="4" fill="#111"/><path d="M3 8v6.500M13 8v6.500" stroke="#8a8a8a" stroke-width="1.600"/></svg>
<div class="a" style="left:235px;top:200px;width:426px;height:646px;background:#fff;border:1px solid #828790"></div>
<div class="a" style="left:242px;top:207px;width:413px;height:24px;background:#f0f0f0"></div>
<svg style="left:245px;top:211px" width="16" height="16" viewBox="0 0 16 16"><rect x=".5" y=".5" width="4.500" height="4.500" fill="#fff" stroke="#444"/><path d="M6.500 3v11.500h8M6.500 6.500h8" fill="none" stroke="#444" stroke-width="1"/><path d="M9 8.500h5l-2.500 3.500z" fill="#e01010"/></svg>
<svg style="left:268px;top:211px" width="16" height="16" viewBox="0 0 16 16"><rect x=".5" y=".5" width="5.500" height="5.500" fill="#fff" stroke="#444"/><rect x=".5" y="9" width="5.500" height="5.500" fill="#fff" stroke="#444"/><path d="M2 3.200h2.500M3.200 2v2.500M2 11.800h2.500M3.200 10.500v2.500" stroke="#444" stroke-width=".9"/><path d="M7 3h8M7 11.500h8" stroke="#444" stroke-width="1"/><path d="M9.500 10h5l-2.500-3.500z" fill="#e01010"/></svg>
<div class="a" style="left:242px;top:232px;width:414px;height:610px;background:#fff;border:1px solid #828790"></div>
<!-- tree items -->
<div class="a" style="left:256px;top:242px;width:1px;height:16px;background:repeating-linear-gradient(#999 0 1px,transparent 1px 2px)"></div>
<div class="a" style="left:260px;top:242px;width:6px;height:1px;background:repeating-linear-gradient(90deg,#999 0 1px,transparent 1px 2px)"></div>
<div class="a" style="left:260px;top:258px;width:6px;height:1px;background:repeating-linear-gradient(90deg,#999 0 1px,transparent 1px 2px)"></div>
<div class="a" style="left:251px;top:238px;width:9px;height:9px;background:#fff;border:1px solid #8e98a8"></div>
<div class="a" style="left:253px;top:242px;width:5px;height:1px;background:#1a2a9a"></div><div class="a" style="left:255px;top:240px;width:1px;height:5px;background:#1a2a9a"></div>
<div class="a" style="left:251px;top:254px;width:9px;height:9px;background:#fff;border:1px solid #8e98a8"></div>
<div class="a" style="left:253px;top:258px;width:5px;height:1px;background:#1a2a9a"></div><div class="a" style="left:255px;top:256px;width:1px;height:5px;background:#1a2a9a"></div>
<svg style="left:266px;top:234px" width="17" height="16" viewBox="0 0 17 16"><rect x="1" y="1" width="10" height="12" rx="1.500" fill="#d4d8de" stroke="#9aa0a8" stroke-width=".8"/><circle cx="10" cy="9.500" r="6" fill="#2fa842" stroke="#fff" stroke-width=".8"/><path d="M6.800 9.500l2.400 2.400 4-4.600" fill="none" stroke="#fff" stroke-width="1.800"/></svg>
<svg style="left:266px;top:250px" width="17" height="16" viewBox="0 0 17 16"><rect x="1" y="1" width="10" height="12" rx="1.500" fill="#d4d8de" stroke="#9aa0a8" stroke-width=".8"/><rect x="6" y="6.500" width="8" height="7" fill="#b4b8be" stroke="#666" stroke-width=".9"/><rect x="7.500" y="8" width="5" height="4" fill="#8e949c"/><rect x="8" y="14" width="7" height="1.300" fill="#666"/></svg>
<div class="a" style="left:284px;top:235px;width:53px;height:15px;background:#efefef"></div>
<div class="t sim" style="left:286px;top:235px">基本设置</div>
<div class="t sim" style="left:286px;top:251px">应用设置</div>
<!-- bottom tabs -->
<div class="a" style="left:236px;top:846px;width:62px;height:21px;background:#fff"></div>
<div class="a" style="left:298px;top:847px;width:57px;height:18px;background:linear-gradient(#f2f2f2,#ececec 45%,#d6d6d6 80%,#cdcdcd);border:1px solid #8d93a3;border-top-color:#b5b9c4"></div>
<div class="t sim" style="left:242px;top:849px">项目一览</div>
<div class="t sim" style="left:303px;top:847px">搜索结果</div>
<div class="a" style="left:235px;top:868px;width:1461px;height:1px;background:#a0a0a0;box-shadow:0 1px 0 #fff"></div>
<!-- right: settings table -->
<div class="a" style="left:662px;top:131px;width:4px;height:737px;background:linear-gradient(90deg,#f0f0f0,#fafafa 50%,#f0f0f0)"></div>
<div class="a" style="left:666px;top:131px;width:1030px;height:19px;background:#3399ff"></div>
<div class="t w sim" style="left:667px;top:132px">设置项目</div>
<div class="a" style="left:668px;top:152px;width:1026px;height:476px;background:#ababab;border:1px solid #696969;border-right-color:#fff;border-bottom-color:#fff"></div>
<div class="a" style="left:669px;top:153px;width:1024px;height:474px;border:1px solid #a0a0a0;border-right-color:#e3e3e3;border-bottom-color:#e3e3e3"></div>
<div class="a" style="left:670px;top:154px;width:160px;height:19px;background:#f0f0f0;border-right:1px solid #a0a0a0;border-bottom:1px solid #696969;box-shadow:inset 1px 1px 0 #fff"></div>
<div class="t sim" style="left:737px;top:155px">项目</div>
<div class="a" style="left:830px;top:154px;width:215px;height:19px;background:#f0f0f0;border-right:1px solid #a0a0a0;border-bottom:1px solid #696969;box-shadow:inset 1px 1px 0 #fff"></div>
<div class="t sim" style="left:928px;top:155px"><span class="ln">CH1</span></div>
<div class="a" style="left:1045px;top:154px;width:215px;height:19px;background:#f0f0f0;border-right:1px solid #a0a0a0;border-bottom:1px solid #696969;box-shadow:inset 1px 1px 0 #fff"></div>
<div class="t sim" style="left:1143px;top:155px"><span class="ln">CH2</span></div>
<div class="a" style="left:1260px;top:154px;width:215px;height:19px;background:#f0f0f0;border-right:1px solid #a0a0a0;border-bottom:1px solid #696969;box-shadow:inset 1px 1px 0 #fff"></div>
<div class="t sim" style="left:1358px;top:155px"><span class="ln">CH3</span></div>
<div class="a" style="left:1475px;top:154px;width:216px;height:19px;background:#f0f0f0;border-right:1px solid #a0a0a0;border-bottom:1px solid #696969;box-shadow:inset 1px 1px 0 #fff"></div>
<div class="t sim" style="left:1574px;top:155px"><span class="ln">CH4</span></div>
<div class="a" style="left:670px;top:173px;width:1021px;height:133px;background:#fff"></div>
<div class="a" style="left:670px;top:173px;width:159px;height:19px;background:#d6e7ff"></div>
<div class="a" style="left:830px;top:173px;width:861px;height:19px;background:#d6e7ff"></div>
<div class="a" style="left:670px;top:193px;width:159px;height:19px;background:#d6e7ff"></div>
<div class="a" style="left:1044px;top:193px;width:1px;height:20px;background:#e6e6e6"></div>
<div class="a" style="left:1259px;top:193px;width:1px;height:20px;background:#e6e6e6"></div>
<div class="a" style="left:1474px;top:193px;width:1px;height:20px;background:#e6e6e6"></div>
<div class="a" style="left:670px;top:213px;width:159px;height:19px;background:#d6e7ff"></div>
<div class="a" style="left:830px;top:213px;width:861px;height:19px;background:#d6e7ff"></div>
<div class="a" style="left:670px;top:233px;width:159px;height:19px;background:#d6e7ff"></div>
<div class="a" style="left:1044px;top:233px;width:1px;height:20px;background:#e6e6e6"></div>
<div class="a" style="left:1259px;top:233px;width:1px;height:20px;background:#e6e6e6"></div>
<div class="a" style="left:1474px;top:233px;width:1px;height:20px;background:#e6e6e6"></div>
<div class="a" style="left:670px;top:253px;width:159px;height:32px;background:#d6e7ff"></div>
<div class="a" style="left:830px;top:253px;width:861px;height:32px;background:#d6e7ff"></div>
<div class="a" style="left:670px;top:285px;width:159px;height:20px;background:#d6e7ff"></div>
<div class="a" style="left:1044px;top:285px;width:1px;height:21px;background:#e6e6e6"></div>
<div class="a" style="left:1259px;top:285px;width:1px;height:21px;background:#e6e6e6"></div>
<div class="a" style="left:1474px;top:285px;width:1px;height:21px;background:#e6e6e6"></div>
<div class="a" style="left:670px;top:306px;width:1021px;height:1px;background:#696969"></div>
<div class="a" style="left:830px;top:173px;width:861px;height:20px;border:1px dotted #222"></div>
<div class="a" style="left:676px;top:187px;width:1px;height:15px;background:repeating-linear-gradient(#9a9a9a 0 1px,transparent 1px 2px)"></div>
<div class="a" style="left:676px;top:202px;width:12px;height:1px;background:repeating-linear-gradient(90deg,#9a9a9a 0 1px,transparent 1px 2px)"></div>
<div class="a" style="left:672px;top:178px;width:9px;height:9px;background:linear-gradient(#fff,#e4e4e4);border:1px solid #989898;border-radius:2px"></div>
<div class="a" style="left:674px;top:182px;width:5px;height:1px;background:#2a3a9a"></div>
<div class="a" style="left:676px;top:227px;width:1px;height:15px;background:repeating-linear-gradient(#9a9a9a 0 1px,transparent 1px 2px)"></div>
<div class="a" style="left:676px;top:242px;width:12px;height:1px;background:repeating-linear-gradient(90deg,#9a9a9a 0 1px,transparent 1px 2px)"></div>
<div class="a" style="left:672px;top:218px;width:9px;height:9px;background:linear-gradient(#fff,#e4e4e4);border:1px solid #989898;border-radius:2px"></div>
<div class="a" style="left:674px;top:222px;width:5px;height:1px;background:#2a3a9a"></div>
<div class="a" style="left:676px;top:273px;width:1px;height:21px;background:repeating-linear-gradient(#9a9a9a 0 1px,transparent 1px 2px)"></div>
<div class="a" style="left:676px;top:294px;width:12px;height:1px;background:repeating-linear-gradient(90deg,#9a9a9a 0 1px,transparent 1px 2px)"></div>
<div class="a" style="left:672px;top:264px;width:9px;height:9px;background:linear-gradient(#fff,#e4e4e4);border:1px solid #989898;border-radius:2px"></div>
<div class="a" style="left:674px;top:268px;width:5px;height:1px;background:#2a3a9a"></div>
<div class="t bd sim" style="left:686px;top:175px;font-weight:bold;letter-spacing:.45px;font-style:italic"><span class="ln">D/A</span>转换允许<span class="ln">/</span>禁止设置</div>
<div class="t bd sim" style="left:833px;top:175px;font-weight:bold;letter-spacing:.45px;">设置<span class="ln">D/A</span>转换控制的方式。</div>
<div class="t sim" style="left:698px;top:195px"><span class="ln">D/A</span>转换允许<span class="ln">/</span>禁止设置</div>
<div class="t bd sim" style="left:686px;top:215px;font-weight:bold;letter-spacing:.45px;"><span class="ln">D/A</span>输出允许<span class="ln">/</span>禁止设置</div>
<div class="t bd sim" style="left:833px;top:215px;font-weight:bold;letter-spacing:.45px;">设置<span class="ln">D/A</span>输出控制的方式。</div>
<div class="t sim" style="left:698px;top:235px"><span class="ln">D/A</span>输出允许<span class="ln">/</span>禁止设置</div>
<div class="t sim" style="left:686px;top:261px;font-weight:bold;letter-spacing:.45px;">范围切换功能</div>
<div class="t sim" style="left:833px;top:256px;font-weight:bold;letter-spacing:.45px;;line-height:13px;height:28px;white-space:pre">可设置模拟输出的输出范围。
可更改输出转换特性。</div>
<div class="t sim" style="left:698px;top:287px">输出范围设置</div>
<div class="t sim" style="left:832px;top:195px">允许</div>
<div class="t sim" style="left:832px;top:235px">允许</div>
<div class="t sim" style="left:832px;top:287px;color:#0000ff">电压输出<span class="ln">(0</span>～<span class="ln">10V)</span></div>
<div class="t sim" style="left:1047px;top:195px">允许</div>
<div class="t sim" style="left:1047px;top:235px">允许</div>
<div class="t sim" style="left:1047px;top:287px;color:#0000ff">电压输出<span class="ln">(0</span>～<span class="ln">10V)</span></div>
<div class="t sim" style="left:1262px;top:195px">允许</div>
<div class="t sim" style="left:1262px;top:235px">允许</div>
<div class="t sim" style="left:1262px;top:287px;color:#0000ff">电压输出<span class="ln">(0</span>～<span class="ln">10V)</span></div>
<div class="t sim" style="left:1477px;top:195px">允许</div>
<div class="t sim" style="left:1477px;top:235px">允许</div>
<div class="t sim" style="left:1477px;top:287px;color:#0000ff">电压输出<span class="ln">(0</span>～<span class="ln">10V)</span></div>
<div class="a" style="left:666px;top:633px;width:1030px;height:19px;background:#3399ff"></div>
<div class="t w sim" style="left:667px;top:634px">说明</div>
<div class="a" style="left:667px;top:653px;width:1028px;height:170px;background:#f0f0f0;border:1px solid #fafafa"></div>
<div class="t sim" style="left:669px;top:654px">设置<span class="ln">D/A</span>转换控制的方式。</div>
<div class="a" style="left:1679px;top:654px;width:1px;height:168px;background:#e2e2e2"></div>
<svg style="left:1682px;top:660px" width="8" height="5" viewBox="0 0 8 5"><path d="M0 4.500h8l-4-4z" fill="#8a8a8a"/></svg>
<svg style="left:1682px;top:811px" width="8" height="5" viewBox="0 0 8 5"><path d="M0 0h8l-4 4z" fill="#8a8a8a"/></svg>
<div class="a" style="left:670px;top:830px;width:128px;height:31px;border:1px solid #8e8f8f;border-radius:3px;background:linear-gradient(#f4f4f4,#ececec 48%,#dedede 52%,#d2d2d2);box-shadow:inset 0 0 0 1px #fafafa"></div>
<div class="t sim" style="left:712px;top:837px">检查<span class="ln">(K)</span></div>
<div class="a" style="left:817px;top:830px;width:195px;height:31px;border:1px solid #8e8f8f;border-radius:3px;background:linear-gradient(#f4f4f4,#ececec 48%,#dedede 52%,#d2d2d2);box-shadow:inset 0 0 0 1px #fafafa"></div>
<div class="t sim" style="left:875px;top:837px">恢复为默认<span class="ln">(U)</span></div>
<div class="a" style="left:1554px;top:876px;width:128px;height:23px;border:1px solid #b4b4b4;border-radius:3px;background:#f3f3f3"></div>
<div class="t sim" style="left:1597px;top:879px;color:#222">应用<span class="ln">(A)</span></div>
<!-- right dock: parts selection -->
<div class="a" style="left:1704px;top:103px;width:200px;height:400px;background:#bcc7d8"></div>
<div class="dockhdr" style="left:1704px;top:103px;width:200px"></div>
<div class="t w" style="left:1708px;top:108px">部件选择</div>
<svg style="left:1872px;top:108px" width="10" height="12" viewBox="0 0 10 12"><path d="M3 1h4v5h-4zM1.500 6.500h7M5 6.500v5M6.300 1v5" fill="none" stroke="#fff" stroke-width="1.100"/></svg>
<svg style="left:1889px;top:109px" width="9" height="9" viewBox="0 0 9 9"><path d="M1 1l7 7M8 1l-7 7" stroke="#fff" stroke-width="1.400"/></svg>
<div class="a" style="left:1709px;top:128px;width:197px;height:24px;background:#f0f0f0;border:1px solid #7a7a7a;box-shadow:inset 1px 1px 0 #fff"></div>
<div class="t" style="left:1712px;top:132px;color:#6d6d6d">(部件搜索)</div>

<svg style="left:1711px;top:155px" width="130" height="16" viewBox="0 0 130 16">
<g fill="#98a2b1"><path d="M4 3l1-2h2l.5 2v6h-4zM12 3l-1-2h-2l-.5 2v6h4zM7 3h2v3h-2z" transform="translate(2,0)"/><path d="M0 11l5-4v2.500h6v3h-6v2.500z"/>
<path d="M26 3l1-2h2l.5 2v6h-4zM34 3l-1-2h-2l-.5 2v6h4zM29 3h2v3h-2z" transform="translate(-2,0)"/><path d="M38 11l-5-4v2.500h-6v3h6v2.500z"/>
<circle cx="56" cy="7" r="5.500"/><rect x="56" y="7" width="10" height="8" fill="#c9cfd9" stroke="#a3acba"/><path d="M60 1h3v3h3v3h-3v3h-3v-3h-3v-3h3z" fill="#b4bcc8"/>
<path d="M80 2v9h9" fill="none" stroke="#8e98a8" stroke-width="1.500"/><rect x="82" y="1" width="9" height="8" fill="#cdd3dd"/><path d="M86 7h3v3h3v2.500h-3v3h-3v-3h-3v-2.500h3z" fill="#9aa3b3"/><path d="M96 7h6l-3 3.500z" fill="#8e98a8"/>
<path d="M110 2v9h9" fill="none" stroke="#6a7383" stroke-width="1.500"/><rect x="112" y="1" width="9" height="7" fill="#cdd3dd"/><path d="M114 8l8 7M122 8l-8 7" stroke="#5a6373" stroke-width="2"/></g>
</svg>
<div class="sep" style="left:1754px;top:154px;background:#9aa3b3"></div>
<div class="sep" style="left:1782px;top:154px;background:#9aa3b3"></div>
<div class="a" style="left:1710px;top:177px;width:194px;height:1px;background:#f4f6fa"></div>
<svg style="left:1711px;top:182px" width="110" height="17" viewBox="0 0 110 17">
<path d="M8 1l2.200 5 5.300.5-4 3.600 1.200 5.400-4.700-2.800-4.700 2.800 1.200-5.400-4-3.600 5.300-.5z" fill="#d3d8e0" stroke="#9aa3b1" stroke-width="1.100"/>
<path d="M23 5h5l1.500 1.500h8.500v9h-15z" fill="#b9c0cb" stroke="#9aa3b1" stroke-width=".9"/><path d="M25 1v5M22.800 2.300l4.400 2.400M27.200 2.300l-4.400 2.400" stroke="#c5cbd6" stroke-width="1.100"/>
<path d="M46 2l11 13M57 2l-11 13" stroke="#8f98a6" stroke-width="1.800"/>
<path d="M73 4h5l1.500 1.500h7.500v9.500h-14z" fill="#b4bbc7" stroke="#98a1af" stroke-width=".9"/><path d="M77 12h7M79 9v3M82 8v4" stroke="#8e98a8" stroke-width="1.200"/><path d="M91 8h6l-3 3.500z" fill="#8e98a8"/></svg>
<div class="sep" style="left:1776px;top:182px;background:#9aa3b3"></div>
<!-- list panel -->
<div class="a" style="left:1704px;top:205px;width:3px;height:270px;background:linear-gradient(90deg,#a0a0a0 0 1px,#6e6e6e 1px 2px,#fff 2px 3px)"></div>
<div class="a" style="left:1706px;top:205px;width:196px;height:270px;background:#f0f0f0;border:1px solid #6a707c;border-bottom:2px solid #2a4a9a;border-right:1px solid #2a4a9a"></div>
<div class="a" style="left:1707px;top:206px;width:193px;height:266px;border-top:1px solid #f9b45a;border-left:1px solid #f9c885"></div>
<div class="t" style="left:1716px;top:213px">显示对象:</div>
<div class="a" style="left:1850px;top:208px;width:51px;height:22px;border:1px solid #707070;border-radius:3px;background:linear-gradient(#f4f4f4,#ececec 48%,#dedede 52%,#d4d4d4)"></div>
<div class="t" style="left:1862px;top:212px;width:21px;overflow:hidden">全部</div>
<svg style="left:1888px;top:217px" width="8" height="5" viewBox="0 0 8 5"><path d="M0 0h8l-4 4.500z" fill="#111"/></svg>
<!-- tabs -->
<div class="a" style="left:1704px;top:476px;width:200px;height:27px;background:linear-gradient(90deg,#fff,#fff 90%,#d9e5fa)"></div>
<div class="a" style="left:1706px;top:475px;width:49px;height:25px;background:linear-gradient(#ffb761,#ffd9a6 60%,#ffe9c9);border-bottom:2px solid #2a56c8;border-radius:0 0 3px 3px"></div>
<div class="a tb2" style="left:1755px;top:477px;width:45px"></div>
<div class="a tb2" style="left:1801px;top:477px;width:35px"></div>
<div class="a tb2" style="left:1837px;top:477px;width:35px"></div>
<div class="a tb2" style="left:1873px;top:477px;width:24px"></div>
<div class="t" style="left:1711px;top:480px">部件...</div>
<div class="t" style="left:1760px;top:479px">收藏...</div>
<div class="t" style="left:1806px;top:479px">履历</div>
<div class="t" style="left:1842px;top:479px">模块</div>
<div class="t" style="left:1878px;top:479px">库</div>
<!-- right dock: detail input -->
<div class="a" style="left:1704px;top:502px;width:200px;height:4px;background:#2d3d5f"></div>
<div class="a" style="left:1704px;top:506px;width:200px;height:400px;background:#bcc7d8"></div>
<div class="dockhdr" style="left:1704px;top:506px;width:200px"></div>
<div class="t w" style="left:1708px;top:511px">配置详细信息输入</div>
<svg style="left:1872px;top:511px" width="10" height="12" viewBox="0 0 10 12"><path d="M3 1h4v5h-4zM1.500 6.500h7M5 6.500v5M6.300 1v5" fill="none" stroke="#fff" stroke-width="1.100"/></svg>
<svg style="left:1889px;top:512px" width="9" height="9" viewBox="0 0 9 9"><path d="M1 1l7 7M8 1l-7 7" stroke="#fff" stroke-width="1.400"/></svg>
<div class="a" style="left:1704px;top:529px;width:200px;height:2px;background:#8a8f99"></div>
<div class="a" style="left:1706px;top:531px;width:196px;height:312px;background:#34486b;border:1px solid #6f9ae0"></div>
<div class="a" style="left:1704px;top:843px;width:200px;height:63px;background:#c9d9f2"></div>
<div class="a" style="left:1706px;top:846px;width:196px;height:57px;background:#d6e7ff;border:1px solid #8db2e8"></div>
<!-- status bar -->
<div class="a" style="left:0;top:905px;width:1904px;height:23px;background:#2b3a5c"></div>
<div class="a ss" style="left:1001px"></div><div class="a ss" style="left:1185px"></div><div class="a ss" style="left:1329px"></div><div class="a ss" style="left:1443px"></div><div class="a ss" style="left:1597px"></div><div class="a ss" style="left:1761px"></div><div class="a ss" style="left:1835px"></div><div class="a ss" style="left:1869px"></div>
<div class="t w" style="left:1335px;top:910px;color:#e8ecf4">FX5U</div>
<div class="t w" style="left:1449px;top:910px;color:#e8ecf4">本站</div>
<div class="t" style="left:1840px;top:910px;color:#66738f">大写</div>
<div class="t" style="left:1874px;top:910px;color:#66738f">数字</div>
<!-- taskbar -->
<div class="a" style="left:0;top:927px;width:1904px;height:40px;background:linear-gradient(#8f98a3 0,#2a313b 1px,#0c1119 3px,#0a0e15 60%,#0c1016 100%)"></div>
<!-- start orb -->
<div class="a" style="left:8px;top:928px;width:38px;height:38px;border-radius:50%;background:radial-gradient(circle at 50% 95%,#35c8f4 0,#1a7fc4 35%,#15508e 60%,#1c4476 80%,#6f9cc8 100%);box-shadow:inset 0 0 2px #dfefff,0 0 2px #000"></div>
<div class="a" style="left:11px;top:930px;width:32px;height:17px;border-radius:16px 16px 10px 10px / 14px 14px 6px 6px;background:linear-gradient(rgba(255,255,255,.55),rgba(255,255,255,.08))"></div>
<svg style="left:14px;top:934px" width="26" height="24" viewBox="0 0 26 24"><path d="M3.500 3.500c3-1.800 5.500-1.600 8 .2l-1.800 7c-2.500-1.700-5-1.800-8-.2z" fill="#f2622a"/><path d="M13 4c3 1.600 5.500 1.200 8.500-.6l-1.800 7c-3 1.800-5.500 2-8.500.4z" fill="#8cc63f"/><path d="M1.300 12c3-1.700 5.500-1.500 8 .3l-1.800 7c-2.500-1.700-5-1.800-8-.2z" fill="#2aa9e8"/><path d="M10.800 12.800c3 1.600 5.500 1.200 8.500-.6l-1.800 7c-3 1.800-5.500 2-8.500.4z" fill="#fdc22b"/></svg>
<!-- IE -->
<svg style="left:72px;top:930px" width="36" height="34" viewBox="0 0 36 34"><path d="M9 19.500h17.500c.3-6.500-3.700-10.500-8.600-10.500-5 0-9 4-9 9.500 0 5.600 4 9.500 9.200 9.500 3.800 0 6.700-2 8-5.500h-5c-.7 1.100-1.700 1.600-3 1.600-2.200 0-3.800-1.600-4-4.600zM13.200 16c.4-2.100 2-3.400 4.200-3.400s3.700 1.300 4 3.400z" fill="#2186e0" stroke="#58b4f6" stroke-width=".6"/><path d="M4 30c-3-4 2-14 11-21s16-8 17.500-5c.8 1.600-.3 4-1.700 6 .8-2 .7-3.500-.3-4.200-2.200-1.500-9 1.500-15.500 7.500s-10.500 13-8 15.500c.8.800 2.300.8 4 .2-2.700 1.800-5.700 2.600-7 1z" fill="#f2b416"/></svg>
<!-- explorer -->
<svg style="left:133px;top:931px" width="36" height="34" viewBox="0 0 36 34"><path d="M3 5h10l2 2.500h16v22h-28z" fill="#f3dc8e" stroke="#c9a94a" stroke-width=".8"/><rect x="6" y="3" width="7" height="3" fill="#fff"/><rect x="7" y="3.200" width="3" height="2.300" fill="#1fae2c"/><rect x="17" y="5.500" width="7" height="3" fill="#fff"/><rect x="18" y="5.700" width="3" height="2.300" fill="#d9281c"/><rect x="24" y="8" width="7" height="3" fill="#fff"/><rect x="25" y="8.200" width="3" height="2.300" fill="#2a8ae6"/><path d="M2.500 11h15l2 2.500h12.500v16.500h-29.500z" fill="#f9e9a8" stroke="#d2b55a" stroke-width=".8"/><path d="M8 31v-9c0-1.500 1-2.500 2.500-2.500h15c1.500 0 2.500 1 2.500 2.500v9h-5v-6.500h-10v6.500z" fill="#8ecdf2" stroke="#4f98c9" stroke-width=".8"/><path d="M8 24l6-6" stroke="#fff" stroke-width="1.200" opacity=".8"/></svg>
<!-- media player -->
<svg style="left:196px;top:932px" width="32" height="32" viewBox="0 0 32 32"><path d="M8 1l20 2.500v23l-20 2.500z" fill="#7fb2da"/><path d="M5 2l20 2v24l-20 2z" fill="#9cc6e6"/><path d="M2.500 3l20 1.500v25l-20 1.500z" fill="#6fa6d2" stroke="#a9d0ee" stroke-width=".6"/><circle cx="13" cy="16" r="9" fill="#f47d1c" stroke="#fbb264" stroke-width="1"/><path d="M10 10.500l8.500 5.500-8.500 5.500z" fill="#fff"/></svg>
<!-- task buttons -->
<div class="a tk" style="left:246px"></div>
<div class="a tk" style="left:308px;background:linear-gradient(135deg,#d0d3d6 0,#8b8f94 38%,#6d7176 52%,#85898e 100%);border-color:#d8dadc"></div>
<div class="a tk" style="left:370px"></div>
<div class="a" style="left:259px;top:931px;width:32px;height:32px;border-radius:3px;background:linear-gradient(115deg,#067a32 0,#067a32 56%,#3f9c62 57%,#2f8f55 100%);border:1px solid #0c5c2a"></div>
<svg style="left:262px;top:937px" width="28" height="24" viewBox="0 0 28 24"><rect x="1.500" y="1.500" width="21" height="14" fill="none" stroke="#fff" stroke-width="1.200"/><rect x="4" y="4" width="14" height="9" fill="#e8f2ea"/><path d="M17 8h9v5h-6M26 13v6h-9" fill="none" stroke="#fff" stroke-width="2.200"/></svg>
<div class="a" style="left:321px;top:931px;width:32px;height:32px;border-radius:3px;background:linear-gradient(115deg,#ff6262 0,#ff5a5a 52%,#f20d12 53%,#e60a10 100%);border:1px solid #c41a1e"></div>
<svg style="left:324px;top:936px" width="28" height="26" viewBox="0 0 28 26"><path d="M1 5.500h12M9 5.500v10h4M17 1v6h9M15 12.500h10.500v10h-10.500M15 17.500h10.500M17.500 9.500h6" fill="none" stroke="#fff" stroke-width="2.400"/></svg>
<div class="a" style="left:383px;top:931px;width:32px;height:32px;border-radius:4px;background:linear-gradient(#2fb3f4,#189be8);border:1px solid #0d7fd0"></div>
<svg style="left:385px;top:933px" width="30" height="30" viewBox="0 0 30 30"><path d="M2 8l8-3v17l-8 3z" fill="#e8b22a" stroke="#a8780a" stroke-width=".7"/><path d="M10 5l5 1.500v17l-5-1.500z" fill="#fbeebc"/><path d="M15 6.500l5-1.500v17l-5 1.500z" fill="#f6e2a0"/><path d="M20 5l7 2.500v16.500l-7-2z" fill="#e8b22a" stroke="#a8780a" stroke-width=".7"/><path d="M17 4l3-.8v17" fill="none" stroke="#d8c27a" stroke-width="1.500"/><circle cx="20" cy="14.500" r="4.500" fill="rgba(190,225,215,.75)" stroke="#2aa870" stroke-width="1.600"/><path d="M16.800 18.300l-5 6" stroke="#f0641a" stroke-width="2.200"/><path d="M5 11c2-1.500 3.500-.5 2.500 1.500s-3 2.500-2.500 0" fill="none" stroke="#7a5a0a" stroke-width=".9"/></svg>
<!-- tray -->
<div class="t mono" style="left:1534px;top:938px;color:#fff;font-size:11px;letter-spacing:-.3px">CH</div>
<svg style="left:1554px;top:936px" width="18" height="18" viewBox="0 0 18 18"><path d="M1.500 17v-15.500h15" fill="none" stroke="#ddd" stroke-width="1"/><text x="2.500" y="8.500" font-size="7.500" font-family="Liberation Sans,sans-serif" fill="#eee">MS</text><text x="2" y="17" font-size="9" font-weight="bold" font-family="Liberation Sans,sans-serif" fill="#ffe600">P</text><text x="9" y="17" font-size="9" font-weight="bold" font-family="Liberation Sans,sans-serif" fill="#ff2020">Y</text></svg>
<svg style="left:1574px;top:936px" width="18" height="18" viewBox="0 0 18 18"><path d="M1 5v-4h3M13 1h3v4M1 13v4h3" fill="none" stroke="#eee" stroke-width="1"/><text x="2" y="13.500" font-size="12" font-family="Noto Sans CJK SC,sans-serif" fill="#fff">体</text><path d="M11 11l3 3-2 2 3 1" fill="none" stroke="#ddd" stroke-width="1"/></svg>
<div class="t" style="left:1594px;top:936px;color:#fff;font-size:15px;line-height:18px;height:18px">英</div>
<div class="a" style="left:1619px;top:940px;width:3px;height:3px;background:#fff"></div>
<div class="t" style="left:1624px;top:937px;color:#fff;font-size:12px">,</div>
<svg style="left:1635px;top:936px" width="16" height="18" viewBox="0 0 16 18"><path d="M1 9l3-4 10 3-1 8-9 .5z" fill="#f7e23a" stroke="#8a7a10" stroke-width=".7"/><path d="M3 8l8 2M3 11l7 1" stroke="#222" stroke-width="1.100"/><circle cx="11" cy="4" r="3" fill="#ddd" stroke="#555"/><path d="M4 2l3 4" stroke="#e02020" stroke-width="1.600"/></svg>
<svg style="left:1655px;top:937px" width="18" height="17" viewBox="0 0 18 17"><rect x="1" y="1" width="11" height="3" fill="#2438d8"/><path d="M1 6h11M1 8.500h11M1 11h11M1 13.500h11" stroke="#e8e8e8" stroke-width="1.400"/><path d="M11 4l5 9-2.500-.5-1 3z" fill="#fff" stroke="#111" stroke-width=".7"/></svg>
<svg style="left:1677px;top:936px" width="17" height="17" viewBox="0 0 17 17"><circle cx="8.500" cy="8.500" r="7.500" fill="#1838d0" stroke="#9ab0e8" stroke-width="1.200"/><text x="5.300" y="13" font-size="12" font-weight="bold" font-family="Liberation Sans,sans-serif" fill="#fff">?</text></svg>
<svg style="left:1702px;top:935px" width="11" height="20" viewBox="0 0 11 20"><rect x="3" y="1" width="6" height="3.500" fill="none" stroke="#fff" stroke-width="1.100"/><rect x="1" y="3.500" width="6" height="3.500" fill="#0a0e15" stroke="#fff" stroke-width="1.100"/><path d="M2.500 14.500h6l-3 3.500z" fill="#fff"/></svg>
<svg style="left:1721px;top:946px" width="9" height="6" viewBox="0 0 9 6"><path d="M0 5.500h9l-4.500-5z" fill="#fff"/></svg>
<svg style="left:1742px;top:938px" width="18" height="18" viewBox="0 0 18 18"><path d="M1 6h3l4-4.500v15l-4-4.500h-3z" fill="#e8e8e8" stroke="#888" stroke-width=".6"/><path d="M10.500 5.500c1.500 2 1.500 5 0 7M13 3.500c2.500 3 2.500 8 0 11" fill="none" stroke="#fff" stroke-width="1.200"/></svg>
<svg style="left:1766px;top:938px" width="18" height="18" viewBox="0 0 18 18"><rect x="5" y="3" width="9" height="10" fill="#222" stroke="#eee" stroke-width="1.200"/><path d="M2 2v4h4v-4M4 6v9h3" fill="none" stroke="#eee" stroke-width="1.200"/><path d="M11 7l5.500 9.500h-11z" fill="#ffd21e" stroke="#8a6a00" stroke-width=".6"/><path d="M11 10.500v3M11 14.500v1" stroke="#222" stroke-width="1.200"/></svg>
<svg style="left:1790px;top:938px" width="18" height="18" viewBox="0 0 18 18"><path d="M2 1v15" stroke="#eee" stroke-width="1.400"/><path d="M3 2c3-1.500 5 1.500 9 0v7c-4 1.500-6-1.500-9 0z" fill="#f4f4f4"/><circle cx="12" cy="12" r="4.800" fill="#e01818" stroke="#fff" stroke-width=".5"/><path d="M10 10l4 4M14 10l-4 4" stroke="#fff" stroke-width="1.500"/></svg>
<div class="t" style="left:1822px;top:931px;width:60px;text-align:center;color:#fff;font-size:12px">18:42</div>
<div class="t" style="left:1822px;top:949px;width:60px;text-align:center;color:#fff;font-size:12px;letter-spacing:.5px">2020/7/26</div>
<div class="a" style="left:1890px;top:928px;width:14px;height:39px;background:linear-gradient(135deg,#6a7078 0,#2a2f37 35%,#161a20 100%);border-left:1px solid #4a5058"></div>
</body>
</html>
